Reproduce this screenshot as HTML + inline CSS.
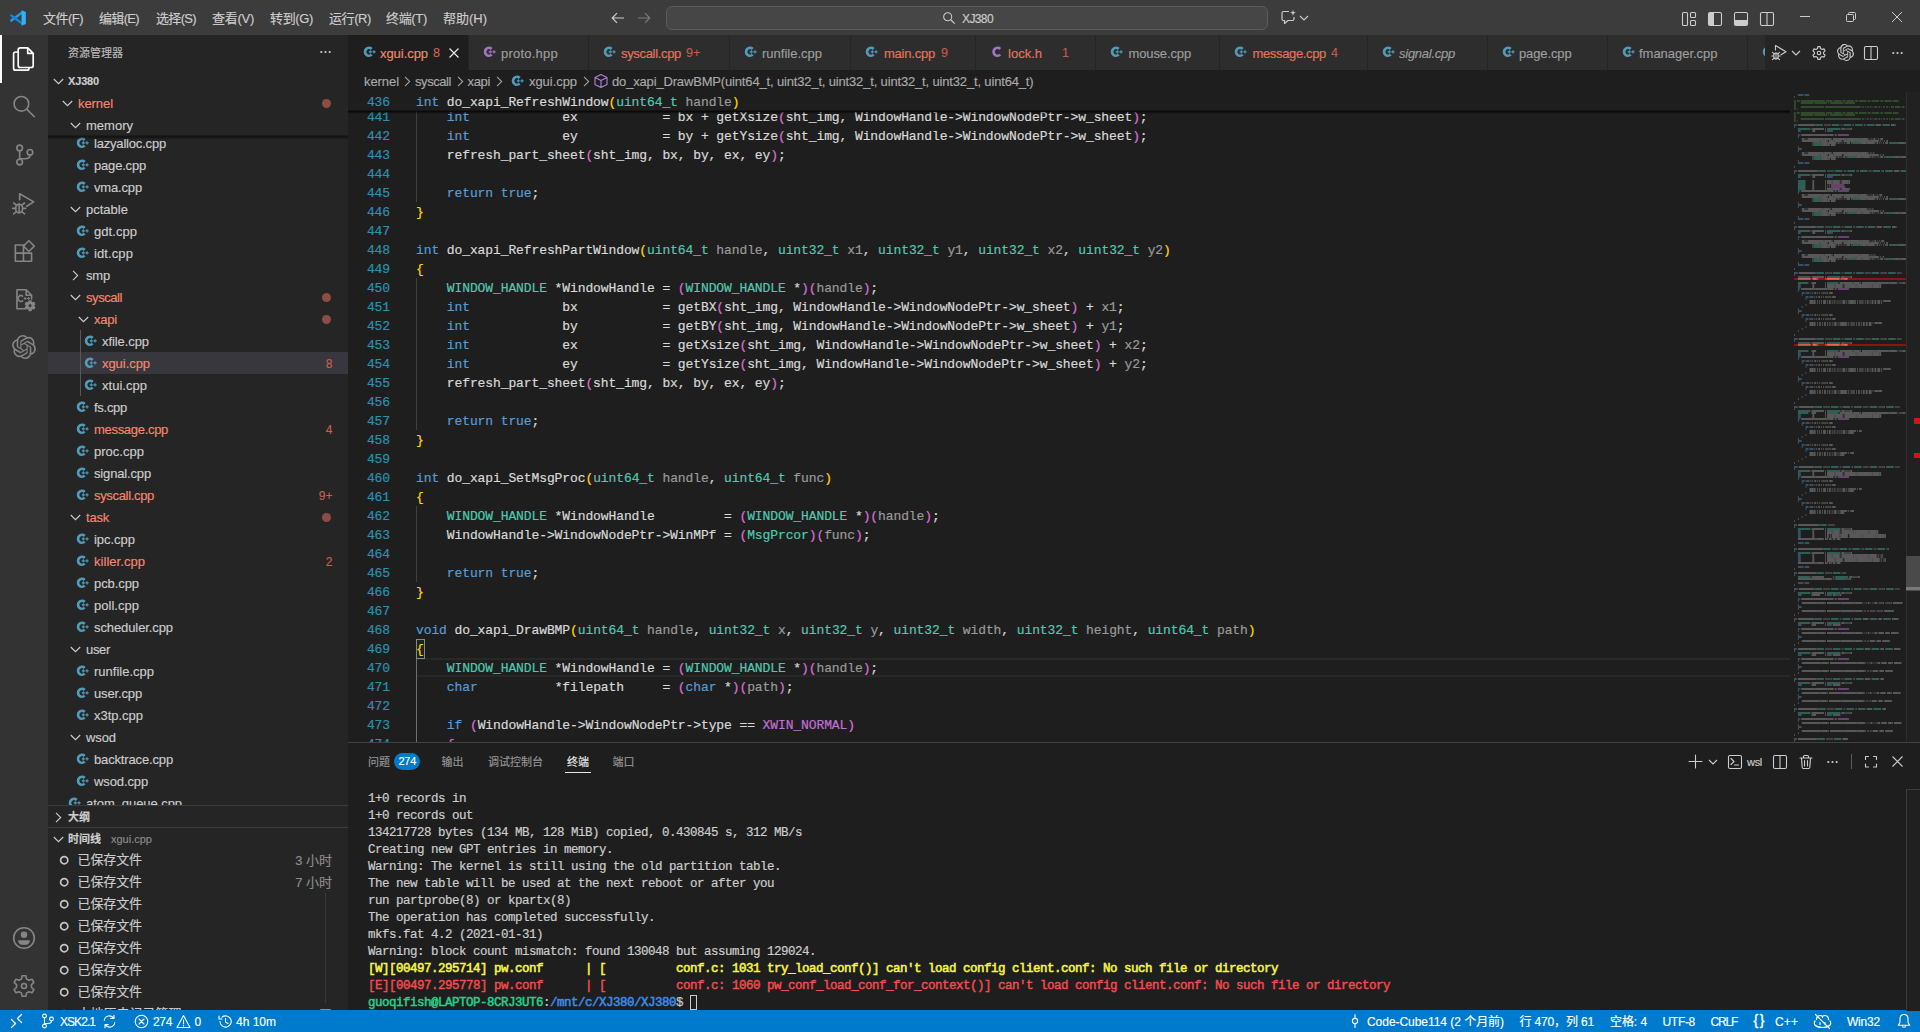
<!DOCTYPE html>
<html lang="zh-CN"><head><meta charset="utf-8"><title>xgui.cpp - XJ380 - Visual Studio Code</title>
<style>
html,body{margin:0;padding:0;}
body{width:1920px;height:1032px;overflow:hidden;position:relative;background:#1e1e1e;font-family:"Liberation Sans","Noto Sans CJK SC",sans-serif;font-size:13px;color:#cccccc;}
.t{position:absolute;white-space:pre;-webkit-text-stroke:0.15px;}
.a{position:absolute;}
svg{position:absolute;overflow:visible;}
.cl{position:absolute;left:416px;height:19px;line-height:19px;white-space:pre;font-family:"Liberation Mono","Noto Sans CJK SC",monospace;font-size:13px;letter-spacing:-0.101px;color:#d8d8d8;-webkit-text-stroke:0.2px;}
.ln{position:absolute;left:348px;width:42px;text-align:right;height:19px;line-height:19px;font-family:"Liberation Mono",monospace;font-size:13px;letter-spacing:-0.101px;color:#2b91af;-webkit-text-stroke:0.2px;}
.k{color:#569cd6}.ty{color:#4ec9b0}.m{color:#c26fd6}.p{color:#9a9a9a}.b1{color:#ffd700}.b2{color:#da70d6}.b3{color:#179fff}
.tl{position:absolute;left:368px;height:17px;line-height:17px;white-space:pre;font-family:"Liberation Mono","Noto Sans CJK SC",monospace;font-size:12.5px;letter-spacing:-0.501px;color:#cccccc;-webkit-text-stroke:0.2px;}

</style></head>
<body>
<div style="position:absolute;left:0px;top:0px;width:1920px;height:35px;background:#3c3c3c;"></div>
<div style="position:absolute;left:0px;top:35px;width:48px;height:975px;background:#333333;"></div>
<div style="position:absolute;left:48px;top:35px;width:300px;height:975px;background:#252526;"></div>
<div style="position:absolute;left:348px;top:35px;width:1572px;height:35px;background:#252526;"></div>
<div style="position:absolute;left:348px;top:70px;width:1572px;height:673px;background:#1e1e1e;"></div>
<div style="position:absolute;left:348px;top:743px;width:1572px;height:267px;background:#1e1e1e;"></div>
<div style="position:absolute;left:348px;top:742px;width:1572px;height:1px;background:#414141;"></div>
<div style="position:absolute;left:0px;top:1010px;width:1920px;height:22px;background:#007acc;"></div>
<svg style="left:10px;top:10px" width="16" height="16" viewBox="0 0 100 100"><path d="M73 18 L8 66" stroke="#1f9cf0" stroke-width="15" stroke-linecap="round"/><path d="M73 82 L8 34" stroke="#0f86d8" stroke-width="15" stroke-linecap="round"/><path d="M72 1 L99 13 V87 L72 99 Z" fill="#2fb1f5"/></svg>
<span class="t" style="left:43px;top:9px;line-height:19px;font-size:13px;color:#cccccc;letter-spacing:-0.522px;">文件(F)</span>
<span class="t" style="left:99px;top:9px;line-height:19px;font-size:13px;color:#cccccc;letter-spacing:-0.669px;">编辑(E)</span>
<span class="t" style="left:156px;top:9px;line-height:19px;font-size:13px;color:#cccccc;letter-spacing:-0.669px;">选择(S)</span>
<span class="t" style="left:212px;top:9px;line-height:19px;font-size:13px;color:#cccccc;letter-spacing:-0.269px;">查看(V)</span>
<span class="t" style="left:270px;top:9px;line-height:19px;font-size:13px;color:#cccccc;letter-spacing:-0.356px;">转到(G)</span>
<span class="t" style="left:329px;top:9px;line-height:19px;font-size:13px;color:#cccccc;letter-spacing:-0.409px;">运行(R)</span>
<span class="t" style="left:386px;top:9px;line-height:19px;font-size:13px;color:#cccccc;letter-spacing:-0.322px;">终端(T)</span>
<span class="t" style="left:443px;top:9px;line-height:19px;font-size:13px;color:#cccccc;letter-spacing:-0.009px;">帮助(H)</span>
<svg style="left:610px;top:10px" width="16" height="16" viewBox="0 0 16 16"><path d="M14 8 H2.5 M7 3.2 L2.2 8 L7 12.8" fill="none" stroke="#cccccc" stroke-width="1.2"/></svg>
<svg style="left:636px;top:10px" width="16" height="16" viewBox="0 0 16 16"><path d="M2 8 H13.5 M9 3.2 L13.8 8 L9 12.8" fill="none" stroke="#7a7a7a" stroke-width="1.2"/></svg>
<div class="a" style="left:666px;top:6px;width:600px;height:22px;background:#464646;border:1px solid #5c5c5c;border-radius:6px;"></div>
<svg style="left:942px;top:11px" width="14" height="14" viewBox="0 0 16 16"><circle cx="6.5" cy="6.5" r="4.6" fill="none" stroke="#cccccc" stroke-width="1.2"/><path d="M10 10 L14.5 14.5" stroke="#cccccc" stroke-width="1.3"/></svg>
<span class="t" style="left:962px;top:10px;line-height:18px;font-size:12px;color:#cccccc;letter-spacing:-0.606px;">XJ380</span>
<svg style="left:1280px;top:9px" width="17" height="17" viewBox="0 0 17 17"><path d="M9 2.5 H3.5 Q2 2.5 2 4 V10 Q2 11.5 3.5 11.5 H4.5 V14.5 L8 11.5 H12.5 Q14 11.5 14 10 V8" fill="none" stroke="#cccccc" stroke-width="1.2" stroke-linejoin="round"/><path d="M13 0.8 L13.7 3 L16 3.8 L13.7 4.6 L13 6.8 L12.3 4.6 L10 3.8 L12.3 3 Z" fill="#cccccc"/></svg>
<svg style="left:1299px;top:13px" width="10" height="10" viewBox="0 0 10 10"><path d="M1 3 L5 7 L9 3" fill="none" stroke="#cccccc" stroke-width="1.1"/></svg>
<svg style="left:1681px;top:11px" width="16" height="16" viewBox="0 0 16 16"><rect x="1.5" y="1.5" width="5" height="13" rx="1" stroke="#cccccc" stroke-width="1.1" fill="none"/><rect x="9.5" y="1.5" width="5" height="5" rx="1" stroke="#cccccc" stroke-width="1.1" fill="none"/><rect x="9.5" y="9.5" width="5" height="5" rx="1" stroke="#cccccc" stroke-width="1.1" fill="none"/></svg>
<svg style="left:1707px;top:11px" width="16" height="16" viewBox="0 0 16 16"><rect x="1.5" y="1.5" width="13" height="13" rx="1.5" stroke="#cccccc" stroke-width="1.1" fill="none"/><path d="M2 2 H7 V14 H2 Z" fill="#cccccc"/></svg>
<svg style="left:1733px;top:11px" width="16" height="16" viewBox="0 0 16 16"><rect x="1.5" y="1.5" width="13" height="13" rx="1.5" stroke="#cccccc" stroke-width="1.1" fill="none"/><path d="M2 9 H14 V14 H2 Z" fill="#cccccc"/></svg>
<svg style="left:1759px;top:11px" width="16" height="16" viewBox="0 0 16 16"><rect x="1.5" y="1.5" width="13" height="13" rx="1.5" stroke="#cccccc" stroke-width="1.1" fill="none"/><path d="M8 2 V14" stroke="#cccccc" stroke-width="1.1" fill="none"/></svg>
<svg style="left:1800px;top:12px" width="10" height="10" viewBox="0 0 10 10"><path d="M0 4.5 H10" stroke="#cccccc" stroke-width="1"/></svg>
<svg style="left:1846px;top:12px" width="10" height="10" viewBox="0 0 10 10"><rect x="0.5" y="2.5" width="7" height="7" rx="1" fill="none" stroke="#cccccc" stroke-width="1"/><path d="M2.5 2.5 V1.5 Q2.5 0.5 3.5 0.5 H8.5 Q9.5 0.5 9.5 1.5 V6.5 Q9.5 7.5 8.5 7.5 H7.5" fill="none" stroke="#cccccc" stroke-width="1"/></svg>
<svg style="left:1892px;top:12px" width="10" height="10" viewBox="0 0 10 10"><path d="M0 0 L10 10 M10 0 L0 10" stroke="#cccccc" stroke-width="1"/></svg>
<div style="position:absolute;left:0px;top:35px;width:2px;height:48px;background:#ffffff;"></div>
<svg style="left:12px;top:47px" width="24" height="24" viewBox="0 0 24 24" fill="none" stroke="#ffffff" stroke-width="1.7" stroke-linejoin="round"><path d="M9.2 0.9 H15.7 L21.2 6.4 V18.5 Q21.2 20.5 19.2 20.5 H8.2 Q6.2 20.5 6.2 18.5 V2.9 Q6.2 0.9 8.2 0.9 Z M15.7 0.9 V6.4 H21.2"/><path d="M6.2 5 H3.6 Q1.6 5 1.6 7 V21.2 Q1.6 23.2 3.6 23.2 H15 Q17 23.2 17 21.2 V20.5"/></svg>
<svg style="left:11px;top:94px" width="26" height="26" viewBox="0 0 24 24" fill="none" stroke="#858585" stroke-width="1.5" stroke-linejoin="round" stroke-linecap="round"><circle cx="9.6" cy="9.05" r="6.8"/><path d="M14.5 14 L21.5 21"/></svg>
<svg style="left:11px;top:142px" width="26" height="26" viewBox="0 0 24 24" fill="none" stroke="#858585" stroke-width="1.5" stroke-linejoin="round" stroke-linecap="round"><circle cx="8" cy="5.5" r="2.6"/><circle cx="8" cy="18.5" r="2.6"/><circle cx="17.5" cy="9.5" r="2.6"/><path d="M8 8.2 V15.8 M17.5 12.2 Q17.5 15.5 13 15.5 H8"/></svg>
<svg style="left:11px;top:190px" width="26" height="26" viewBox="0 0 24 24" fill="none" stroke="#858585" stroke-width="1.5" stroke-linejoin="round" stroke-linecap="round"><path d="M8 9 V3.5 L21 11 L14.5 15"/><ellipse cx="7.5" cy="17" rx="3.2" ry="4"/><path d="M7.5 13 V21 M4.3 17 H1.5 M10.7 17 H13.5 M5 14 L2.5 12 M10 14 L12.5 12 M5 20 L2.5 22 M10 20 L12.5 22"/></svg>
<svg style="left:11px;top:238px" width="26" height="26" viewBox="0 0 24 24" fill="none" stroke="#858585" stroke-width="1.5" stroke-linejoin="round" stroke-linecap="round"><path d="M4 6.5 H11.5 V14 H19 V21.5 H4 Z M11.5 14 V21.5 M4 14 H11.5"/><path d="M16.5 3 L21.5 8 L16.5 13 L11.5 8 Z" transform="translate(0,-0.5)"/></svg>
<svg style="left:11px;top:286px" width="26" height="26" viewBox="0 0 24 24" fill="none" stroke="#858585" stroke-width="1.5" stroke-linejoin="round" stroke-linecap="round"><path d="M13 21 H5.5 V3.5 H14 L19 8.5 V12 M14 3.5 V8.5 H19"/><path d="M10.8 9.3 A2.7 2.7 0 1 0 10.8 13.7" stroke-width="1.4"/><path d="M12 11.5 H14 M13 10.5 V12.5 M15.2 11.5 H17.2 M16.2 10.5 V12.5" stroke-width="0.9"/><g transform="translate(17.6 18.2) scale(0.46) translate(-12 -12)" stroke-width="3.2"><circle cx="12" cy="12" r="2.2"/><path d="M10.3 2.5 H13.7 L14.3 5.4 L16.6 6.7 L19.4 5.8 L21.1 8.7 L18.9 10.7 V13.3 L21.1 15.3 L19.4 18.2 L16.6 17.3 L14.3 18.6 L13.7 21.5 H10.3 L9.7 18.6 L7.4 17.3 L4.6 18.2 L2.9 15.3 L5.1 13.3 V10.7 L2.9 8.7 L4.6 5.8 L7.4 6.7 L9.7 5.4 Z" fill="#858585"/><circle cx="12" cy="12" r="3" fill="#333333" stroke="none"/></g></svg>
<svg style="left:12px;top:335px" width="24" height="24" viewBox="0 0 24 24"><path d="M22.2819 9.8211a5.9847 5.9847 0 0 0-.5157-4.9108 6.0462 6.0462 0 0 0-6.5098-2.9A6.0651 6.0651 0 0 0 4.9807 4.1818a5.9847 5.9847 0 0 0-3.9977 2.9 6.0462 6.0462 0 0 0 .7427 7.0966 5.98 5.98 0 0 0 .511 4.9107 6.051 6.051 0 0 0 6.5146 2.9001A5.9847 5.9847 0 0 0 13.2599 24a6.0557 6.0557 0 0 0 5.7718-4.2058 5.9894 5.9894 0 0 0 3.9977-2.9001 6.0557 6.0557 0 0 0-.7475-7.0729zm-9.022 12.6081a4.4755 4.4755 0 0 1-2.8764-1.0408l.1419-.0804 4.7783-2.7582a.7948.7948 0 0 0 .3927-.6813v-6.7369l2.02 1.1686a.071.071 0 0 1 .038.052v5.5826a4.504 4.504 0 0 1-4.4945 4.4944zm-9.6607-4.1254a4.4708 4.4708 0 0 1-.5346-3.0137l.142.0852 4.783 2.7582a.7712.7712 0 0 0 .7806 0l5.8428-3.3685v2.3324a.0804.0804 0 0 1-.0332.0615L9.74 19.9502a4.4992 4.4992 0 0 1-6.1408-1.6464zM2.3408 7.8956a4.485 4.485 0 0 1 2.3655-1.9728V11.6a.7664.7664 0 0 0 .3879.6765l5.8144 3.3543-2.0201 1.1685a.0757.0757 0 0 1-.071 0l-4.8303-2.7865A4.504 4.504 0 0 1 2.3408 7.872zm16.5963 3.8558L13.1038 8.364 15.1192 7.2a.0757.0757 0 0 1 .071 0l4.8303 2.7913a4.4944 4.4944 0 0 1-.6765 8.1042v-5.6772a.79.79 0 0 0-.407-.667zm2.0107-3.0231l-.142-.0852-4.7735-2.7818a.7759.7759 0 0 0-.7854 0L9.409 9.2297V6.8974a.0662.0662 0 0 1 .0284-.0615l4.8303-2.7866a4.4992 4.4992 0 0 1 6.6802 4.66zM8.3065 12.863l-2.02-1.1638a.0804.0804 0 0 1-.038-.0567V6.0742a4.4992 4.4992 0 0 1 7.3757-3.4537l-.142.0805L8.704 5.459a.7948.7948 0 0 0-.3927.6813zm1.0976-2.3654l2.602-1.4998 2.6069 1.4998v2.9994l-2.5974 1.4997-2.6067-1.4997Z" fill="#858585"/></svg>
<svg style="left:11px;top:925px" width="26" height="26" viewBox="0 0 24 24" fill="none" stroke="#858585" stroke-width="1.5" stroke-linejoin="round" stroke-linecap="round"><circle cx="12" cy="12" r="9.5"/><circle cx="12" cy="9" r="3" fill="#858585" stroke="none"/><path d="M6.5 14 H17.5 Q17.5 18.5 12 18.5 Q6.5 18.5 6.5 14 Z" fill="#858585" stroke="none"/></svg>
<svg style="left:11px;top:973px" width="26" height="26" viewBox="0 0 24 24" fill="none" stroke="#858585" stroke-width="1.5" stroke-linejoin="round" stroke-linecap="round"><circle cx="12" cy="12" r="2.3"/><path d="M10.3 2.5 H13.7 L14.3 5.4 L16.6 6.7 L19.4 5.8 L21.1 8.7 L18.9 10.7 V13.3 L21.1 15.3 L19.4 18.2 L16.6 17.3 L14.3 18.6 L13.7 21.5 H10.3 L9.7 18.6 L7.4 17.3 L4.6 18.2 L2.9 15.3 L5.1 13.3 V10.7 L2.9 8.7 L4.6 5.8 L7.4 6.7 L9.7 5.4 Z"/></svg>
<span class="t" style="left:68px;top:44.5px;line-height:17px;font-size:11px;color:#bbbbbb;">资源管理器</span>
<svg style="left:320px;top:50px" width="11" height="4" viewBox="0 0 11 4"><circle cx="1.3" cy="2" r="1.1" fill="#cccccc"/><circle cx="5.5" cy="2" r="1.1" fill="#cccccc"/><circle cx="9.7" cy="2" r="1.1" fill="#cccccc"/></svg>
<div style="position:absolute;left:48px;top:352px;width:300px;height:22px;background:#37373d;"></div>
<div style="position:absolute;left:80px;top:330px;width:1px;height:66px;background:#585858;"></div>
<div class="a" style="left:0;top:136px;width:348px;height:669px;overflow:hidden"><div class="a" style="left:0;top:-136px;width:348px;height:1032px"><svg style="left:77px;top:137px" width="13" height="12" viewBox="0 0 13 12"><path d="M7.75 2.95 A3.95 3.95 0 1 0 7.75 8.65" fill="none" stroke="#519aba" stroke-width="2.7"/><path d="M4.7 5.8 H7.9 M6.3 4.2 V7.4 M8.4 5.8 H11.6 M10 4.2 V7.4" fill="none" stroke="#519aba" stroke-width="1.15"/></svg><span class="t" style="left:94px;top:133.5px;line-height:19px;font-size:13px;color:#cccccc;letter-spacing:-0.188px;">lazyalloc.cpp</span><svg style="left:77px;top:159px" width="13" height="12" viewBox="0 0 13 12"><path d="M7.75 2.95 A3.95 3.95 0 1 0 7.75 8.65" fill="none" stroke="#519aba" stroke-width="2.7"/><path d="M4.7 5.8 H7.9 M6.3 4.2 V7.4 M8.4 5.8 H11.6 M10 4.2 V7.4" fill="none" stroke="#519aba" stroke-width="1.15"/></svg><span class="t" style="left:94px;top:155.5px;line-height:19px;font-size:13px;color:#cccccc;letter-spacing:-0.188px;">page.cpp</span><svg style="left:77px;top:181px" width="13" height="12" viewBox="0 0 13 12"><path d="M7.75 2.95 A3.95 3.95 0 1 0 7.75 8.65" fill="none" stroke="#519aba" stroke-width="2.7"/><path d="M4.7 5.8 H7.9 M6.3 4.2 V7.4 M8.4 5.8 H11.6 M10 4.2 V7.4" fill="none" stroke="#519aba" stroke-width="1.15"/></svg><span class="t" style="left:94px;top:177.5px;line-height:19px;font-size:13px;color:#cccccc;letter-spacing:-0.163px;">vma.cpp</span><svg style="left:69.5px;top:203.5px" width="11" height="11" viewBox="0 0 11 11"><path d="M0.8 3 L5.5 7.7 L10.2 3" fill="none" stroke="#cccccc" stroke-width="1.1"/></svg><span class="t" style="left:86px;top:199.5px;line-height:19px;font-size:13px;color:#cccccc;letter-spacing:0.011px;">pctable</span><svg style="left:77px;top:225px" width="13" height="12" viewBox="0 0 13 12"><path d="M7.75 2.95 A3.95 3.95 0 1 0 7.75 8.65" fill="none" stroke="#519aba" stroke-width="2.7"/><path d="M4.7 5.8 H7.9 M6.3 4.2 V7.4 M8.4 5.8 H11.6 M10 4.2 V7.4" fill="none" stroke="#519aba" stroke-width="1.15"/></svg><span class="t" style="left:94px;top:221.5px;line-height:19px;font-size:13px;color:#cccccc;letter-spacing:0.049px;">gdt.cpp</span><svg style="left:77px;top:247px" width="13" height="12" viewBox="0 0 13 12"><path d="M7.75 2.95 A3.95 3.95 0 1 0 7.75 8.65" fill="none" stroke="#519aba" stroke-width="2.7"/><path d="M4.7 5.8 H7.9 M6.3 4.2 V7.4 M8.4 5.8 H11.6 M10 4.2 V7.4" fill="none" stroke="#519aba" stroke-width="1.15"/></svg><span class="t" style="left:94px;top:243.5px;line-height:19px;font-size:13px;color:#cccccc;letter-spacing:0.098px;">idt.cpp</span><svg style="left:70px;top:269.5px" width="11" height="11" viewBox="0 0 11 11"><path d="M3 0.8 L7.7 5.5 L3 10.2" fill="none" stroke="#cccccc" stroke-width="1.1"/></svg><span class="t" style="left:86px;top:265.5px;line-height:19px;font-size:13px;color:#cccccc;letter-spacing:-0.188px;">smp</span><svg style="left:69.5px;top:291.5px" width="11" height="11" viewBox="0 0 11 11"><path d="M0.8 3 L5.5 7.7 L10.2 3" fill="none" stroke="#cccccc" stroke-width="1.1"/></svg><span class="t" style="left:86px;top:287.5px;line-height:19px;font-size:13px;color:#f48771;letter-spacing:-0.431px;">syscall</span><div class="a" style="left:322px;top:292.5px;width:9px;height:9px;border-radius:5px;background:#8c4d43"></div><svg style="left:77.5px;top:313.5px" width="11" height="11" viewBox="0 0 11 11"><path d="M0.8 3 L5.5 7.7 L10.2 3" fill="none" stroke="#cccccc" stroke-width="1.1"/></svg><span class="t" style="left:94px;top:309.5px;line-height:19px;font-size:13px;color:#f48771;letter-spacing:-0.215px;">xapi</span><div class="a" style="left:322px;top:314.5px;width:9px;height:9px;border-radius:5px;background:#8c4d43"></div><svg style="left:85px;top:335px" width="13" height="12" viewBox="0 0 13 12"><path d="M7.75 2.95 A3.95 3.95 0 1 0 7.75 8.65" fill="none" stroke="#519aba" stroke-width="2.7"/><path d="M4.7 5.8 H7.9 M6.3 4.2 V7.4 M8.4 5.8 H11.6 M10 4.2 V7.4" fill="none" stroke="#519aba" stroke-width="1.15"/></svg><span class="t" style="left:102px;top:331.5px;line-height:19px;font-size:13px;color:#cccccc;letter-spacing:-0.078px;">xfile.cpp</span><svg style="left:85px;top:357px" width="13" height="12" viewBox="0 0 13 12"><path d="M7.75 2.95 A3.95 3.95 0 1 0 7.75 8.65" fill="none" stroke="#519aba" stroke-width="2.7"/><path d="M4.7 5.8 H7.9 M6.3 4.2 V7.4 M8.4 5.8 H11.6 M10 4.2 V7.4" fill="none" stroke="#519aba" stroke-width="1.15"/></svg><span class="t" style="left:102px;top:353.5px;line-height:19px;font-size:13px;color:#f48771;letter-spacing:-0.053px;">xgui.cpp</span><span class="t" style="left:32.5px;width:300px;text-align:right;top:355px;line-height:18px;font-size:12px;color:#c5604f;">8</span><svg style="left:85px;top:379px" width="13" height="12" viewBox="0 0 13 12"><path d="M7.75 2.95 A3.95 3.95 0 1 0 7.75 8.65" fill="none" stroke="#519aba" stroke-width="2.7"/><path d="M4.7 5.8 H7.9 M6.3 4.2 V7.4 M8.4 5.8 H11.6 M10 4.2 V7.4" fill="none" stroke="#519aba" stroke-width="1.15"/></svg><span class="t" style="left:102px;top:375.5px;line-height:19px;font-size:13px;color:#cccccc;letter-spacing:0.023px;">xtui.cpp</span><svg style="left:77px;top:401px" width="13" height="12" viewBox="0 0 13 12"><path d="M7.75 2.95 A3.95 3.95 0 1 0 7.75 8.65" fill="none" stroke="#519aba" stroke-width="2.7"/><path d="M4.7 5.8 H7.9 M6.3 4.2 V7.4 M8.4 5.8 H11.6 M10 4.2 V7.4" fill="none" stroke="#519aba" stroke-width="1.15"/></svg><span class="t" style="left:94px;top:397.5px;line-height:19px;font-size:13px;color:#cccccc;letter-spacing:-0.281px;">fs.cpp</span><svg style="left:77px;top:423px" width="13" height="12" viewBox="0 0 13 12"><path d="M7.75 2.95 A3.95 3.95 0 1 0 7.75 8.65" fill="none" stroke="#519aba" stroke-width="2.7"/><path d="M4.7 5.8 H7.9 M6.3 4.2 V7.4 M8.4 5.8 H11.6 M10 4.2 V7.4" fill="none" stroke="#519aba" stroke-width="1.15"/></svg><span class="t" style="left:94px;top:419.5px;line-height:19px;font-size:13px;color:#f48771;letter-spacing:-0.303px;">message.cpp</span><span class="t" style="left:32.5px;width:300px;text-align:right;top:421px;line-height:18px;font-size:12px;color:#c5604f;">4</span><svg style="left:77px;top:445px" width="13" height="12" viewBox="0 0 13 12"><path d="M7.75 2.95 A3.95 3.95 0 1 0 7.75 8.65" fill="none" stroke="#519aba" stroke-width="2.7"/><path d="M4.7 5.8 H7.9 M6.3 4.2 V7.4 M8.4 5.8 H11.6 M10 4.2 V7.4" fill="none" stroke="#519aba" stroke-width="1.15"/></svg><span class="t" style="left:94px;top:441.5px;line-height:19px;font-size:13px;color:#cccccc;letter-spacing:0.016px;">proc.cpp</span><svg style="left:77px;top:467px" width="13" height="12" viewBox="0 0 13 12"><path d="M7.75 2.95 A3.95 3.95 0 1 0 7.75 8.65" fill="none" stroke="#519aba" stroke-width="2.7"/><path d="M4.7 5.8 H7.9 M6.3 4.2 V7.4 M8.4 5.8 H11.6 M10 4.2 V7.4" fill="none" stroke="#519aba" stroke-width="1.15"/></svg><span class="t" style="left:94px;top:463.5px;line-height:19px;font-size:13px;color:#cccccc;letter-spacing:-0.155px;">signal.cpp</span><svg style="left:77px;top:489px" width="13" height="12" viewBox="0 0 13 12"><path d="M7.75 2.95 A3.95 3.95 0 1 0 7.75 8.65" fill="none" stroke="#519aba" stroke-width="2.7"/><path d="M4.7 5.8 H7.9 M6.3 4.2 V7.4 M8.4 5.8 H11.6 M10 4.2 V7.4" fill="none" stroke="#519aba" stroke-width="1.15"/></svg><span class="t" style="left:94px;top:485.5px;line-height:19px;font-size:13px;color:#f48771;letter-spacing:-0.325px;">syscall.cpp</span><span class="t" style="left:32.5px;width:300px;text-align:right;top:487px;line-height:18px;font-size:12px;color:#c5604f;">9+</span><svg style="left:69.5px;top:511.5px" width="11" height="11" viewBox="0 0 11 11"><path d="M0.8 3 L5.5 7.7 L10.2 3" fill="none" stroke="#cccccc" stroke-width="1.1"/></svg><span class="t" style="left:86px;top:507.5px;line-height:19px;font-size:13px;color:#f48771;letter-spacing:-0.211px;">task</span><div class="a" style="left:322px;top:512.5px;width:9px;height:9px;border-radius:5px;background:#8c4d43"></div><svg style="left:77px;top:533px" width="13" height="12" viewBox="0 0 13 12"><path d="M7.75 2.95 A3.95 3.95 0 1 0 7.75 8.65" fill="none" stroke="#519aba" stroke-width="2.7"/><path d="M4.7 5.8 H7.9 M6.3 4.2 V7.4 M8.4 5.8 H11.6 M10 4.2 V7.4" fill="none" stroke="#519aba" stroke-width="1.15"/></svg><span class="t" style="left:94px;top:529.5px;line-height:19px;font-size:13px;color:#cccccc;letter-spacing:-0.029px;">ipc.cpp</span><svg style="left:77px;top:555px" width="13" height="12" viewBox="0 0 13 12"><path d="M7.75 2.95 A3.95 3.95 0 1 0 7.75 8.65" fill="none" stroke="#519aba" stroke-width="2.7"/><path d="M4.7 5.8 H7.9 M6.3 4.2 V7.4 M8.4 5.8 H11.6 M10 4.2 V7.4" fill="none" stroke="#519aba" stroke-width="1.15"/></svg><span class="t" style="left:94px;top:551.5px;line-height:19px;font-size:13px;color:#f48771;letter-spacing:0.042px;">killer.cpp</span><span class="t" style="left:32.5px;width:300px;text-align:right;top:553px;line-height:18px;font-size:12px;color:#c5604f;">2</span><svg style="left:77px;top:577px" width="13" height="12" viewBox="0 0 13 12"><path d="M7.75 2.95 A3.95 3.95 0 1 0 7.75 8.65" fill="none" stroke="#519aba" stroke-width="2.7"/><path d="M4.7 5.8 H7.9 M6.3 4.2 V7.4 M8.4 5.8 H11.6 M10 4.2 V7.4" fill="none" stroke="#519aba" stroke-width="1.15"/></svg><span class="t" style="left:94px;top:573.5px;line-height:19px;font-size:13px;color:#cccccc;letter-spacing:-0.078px;">pcb.cpp</span><svg style="left:77px;top:599px" width="13" height="12" viewBox="0 0 13 12"><path d="M7.75 2.95 A3.95 3.95 0 1 0 7.75 8.65" fill="none" stroke="#519aba" stroke-width="2.7"/><path d="M4.7 5.8 H7.9 M6.3 4.2 V7.4 M8.4 5.8 H11.6 M10 4.2 V7.4" fill="none" stroke="#519aba" stroke-width="1.15"/></svg><span class="t" style="left:94px;top:595.5px;line-height:19px;font-size:13px;color:#cccccc;letter-spacing:0.023px;">poll.cpp</span><svg style="left:77px;top:621px" width="13" height="12" viewBox="0 0 13 12"><path d="M7.75 2.95 A3.95 3.95 0 1 0 7.75 8.65" fill="none" stroke="#519aba" stroke-width="2.7"/><path d="M4.7 5.8 H7.9 M6.3 4.2 V7.4 M8.4 5.8 H11.6 M10 4.2 V7.4" fill="none" stroke="#519aba" stroke-width="1.15"/></svg><span class="t" style="left:94px;top:617.5px;line-height:19px;font-size:13px;color:#cccccc;letter-spacing:-0.095px;">scheduler.cpp</span><svg style="left:69.5px;top:643.5px" width="11" height="11" viewBox="0 0 11 11"><path d="M0.8 3 L5.5 7.7 L10.2 3" fill="none" stroke="#cccccc" stroke-width="1.1"/></svg><span class="t" style="left:86px;top:639.5px;line-height:19px;font-size:13px;color:#cccccc;letter-spacing:-0.324px;">user</span><svg style="left:77px;top:665px" width="13" height="12" viewBox="0 0 13 12"><path d="M7.75 2.95 A3.95 3.95 0 1 0 7.75 8.65" fill="none" stroke="#519aba" stroke-width="2.7"/><path d="M4.7 5.8 H7.9 M6.3 4.2 V7.4 M8.4 5.8 H11.6 M10 4.2 V7.4" fill="none" stroke="#519aba" stroke-width="1.15"/></svg><span class="t" style="left:94px;top:661.5px;line-height:19px;font-size:13px;color:#cccccc;letter-spacing:0.001px;">runfile.cpp</span><svg style="left:77px;top:687px" width="13" height="12" viewBox="0 0 13 12"><path d="M7.75 2.95 A3.95 3.95 0 1 0 7.75 8.65" fill="none" stroke="#519aba" stroke-width="2.7"/><path d="M4.7 5.8 H7.9 M6.3 4.2 V7.4 M8.4 5.8 H11.6 M10 4.2 V7.4" fill="none" stroke="#519aba" stroke-width="1.15"/></svg><span class="t" style="left:94px;top:683.5px;line-height:19px;font-size:13px;color:#cccccc;letter-spacing:-0.145px;">user.cpp</span><svg style="left:77px;top:709px" width="13" height="12" viewBox="0 0 13 12"><path d="M7.75 2.95 A3.95 3.95 0 1 0 7.75 8.65" fill="none" stroke="#519aba" stroke-width="2.7"/><path d="M4.7 5.8 H7.9 M6.3 4.2 V7.4 M8.4 5.8 H11.6 M10 4.2 V7.4" fill="none" stroke="#519aba" stroke-width="1.15"/></svg><span class="t" style="left:94px;top:705.5px;line-height:19px;font-size:13px;color:#cccccc;letter-spacing:-0.020px;">x3tp.cpp</span><svg style="left:69.5px;top:731.5px" width="11" height="11" viewBox="0 0 11 11"><path d="M0.8 3 L5.5 7.7 L10.2 3" fill="none" stroke="#cccccc" stroke-width="1.1"/></svg><span class="t" style="left:86px;top:727.5px;line-height:19px;font-size:13px;color:#cccccc;letter-spacing:-0.090px;">wsod</span><svg style="left:77px;top:753px" width="13" height="12" viewBox="0 0 13 12"><path d="M7.75 2.95 A3.95 3.95 0 1 0 7.75 8.65" fill="none" stroke="#519aba" stroke-width="2.7"/><path d="M4.7 5.8 H7.9 M6.3 4.2 V7.4 M8.4 5.8 H11.6 M10 4.2 V7.4" fill="none" stroke="#519aba" stroke-width="1.15"/></svg><span class="t" style="left:94px;top:749.5px;line-height:19px;font-size:13px;color:#cccccc;letter-spacing:-0.149px;">backtrace.cpp</span><svg style="left:77px;top:775px" width="13" height="12" viewBox="0 0 13 12"><path d="M7.75 2.95 A3.95 3.95 0 1 0 7.75 8.65" fill="none" stroke="#519aba" stroke-width="2.7"/><path d="M4.7 5.8 H7.9 M6.3 4.2 V7.4 M8.4 5.8 H11.6 M10 4.2 V7.4" fill="none" stroke="#519aba" stroke-width="1.15"/></svg><span class="t" style="left:94px;top:771.5px;line-height:19px;font-size:13px;color:#cccccc;letter-spacing:-0.115px;">wsod.cpp</span><svg style="left:69px;top:797px" width="13" height="12" viewBox="0 0 13 12"><path d="M7.75 2.95 A3.95 3.95 0 1 0 7.75 8.65" fill="none" stroke="#519aba" stroke-width="2.7"/><path d="M4.7 5.8 H7.9 M6.3 4.2 V7.4 M8.4 5.8 H11.6 M10 4.2 V7.4" fill="none" stroke="#519aba" stroke-width="1.15"/></svg><span class="t" style="left:86px;top:793.5px;line-height:19px;font-size:13px;color:#cccccc;letter-spacing:-0.061px;">atom_queue.cpp</span></div></div>
<svg style="left:53px;top:75.5px" width="11" height="11" viewBox="0 0 11 11"><path d="M0.8 3 L5.5 7.7 L10.2 3" fill="none" stroke="#cccccc" stroke-width="1.1"/></svg>
<span class="t" style="left:68px;top:72.5px;line-height:17px;font-size:11px;color:#cccccc;font-weight:bold;letter-spacing:-0.163px;">XJ380</span>
<svg style="left:61.5px;top:97.5px" width="11" height="11" viewBox="0 0 11 11"><path d="M0.8 3 L5.5 7.7 L10.2 3" fill="none" stroke="#cccccc" stroke-width="1.1"/></svg>
<span class="t" style="left:78px;top:93.5px;line-height:19px;font-size:13px;color:#f48771;letter-spacing:-0.070px;">kernel</span>
<div class="a" style="left:322px;top:98.5px;width:9px;height:9px;border-radius:5px;background:#8c4d43"></div>
<svg style="left:69.5px;top:119.5px" width="11" height="11" viewBox="0 0 11 11"><path d="M0.8 3 L5.5 7.7 L10.2 3" fill="none" stroke="#cccccc" stroke-width="1.1"/></svg>
<span class="t" style="left:86px;top:115.5px;line-height:19px;font-size:13px;color:#cccccc;letter-spacing:0.008px;">memory</span>
<div class="a" style="left:48px;top:136px;width:300px;height:4px;background:linear-gradient(#0000008c,#00000000)"></div>
<div style="position:absolute;left:48px;top:135px;width:300px;height:1px;background:#1c1c1c;"></div>
<div style="position:absolute;left:48px;top:805px;width:300px;height:1px;background:#3c3c3c;"></div>
<svg style="left:52.5px;top:811.5px" width="11" height="11" viewBox="0 0 11 11"><path d="M3 0.8 L7.7 5.5 L3 10.2" fill="none" stroke="#cccccc" stroke-width="1.1"/></svg>
<span class="t" style="left:68px;top:808.5px;line-height:17px;font-size:11px;color:#cccccc;font-weight:bold;">大纲</span>
<div style="position:absolute;left:48px;top:827px;width:300px;height:1px;background:#3c3c3c;"></div>
<svg style="left:53px;top:833.5px" width="11" height="11" viewBox="0 0 11 11"><path d="M0.8 3 L5.5 7.7 L10.2 3" fill="none" stroke="#cccccc" stroke-width="1.1"/></svg>
<span class="t" style="left:68px;top:830.5px;line-height:17px;font-size:11px;color:#cccccc;font-weight:bold;">时间线</span>
<span class="t" style="left:111px;top:831px;line-height:17px;font-size:11px;color:#8c8c8c;letter-spacing:0.002px;">xgui.cpp</span>
<div class="a" style="left:0;top:849px;width:348px;height:161px;overflow:hidden"><div class="a" style="left:0;top:-849px;width:348px;height:1032px"><svg style="left:59px;top:855px" width="10" height="10" viewBox="0 0 10 10"><circle cx="5.2" cy="5.2" r="3.6" fill="none" stroke="#c5c5c5" stroke-width="1.7"/></svg><span class="t" style="left:77.5px;top:849.5px;line-height:19px;font-size:13px;color:#cccccc;letter-spacing:-0.103px;">已保存文件</span><span class="t" style="left:32px;width:300px;text-align:right;top:851px;line-height:19px;font-size:13px;color:#8c8c8c;">3 小时</span><svg style="left:59px;top:877px" width="10" height="10" viewBox="0 0 10 10"><circle cx="5.2" cy="5.2" r="3.6" fill="none" stroke="#c5c5c5" stroke-width="1.7"/></svg><span class="t" style="left:77.5px;top:871.5px;line-height:19px;font-size:13px;color:#cccccc;letter-spacing:-0.103px;">已保存文件</span><span class="t" style="left:32px;width:300px;text-align:right;top:873px;line-height:19px;font-size:13px;color:#8c8c8c;">7 小时</span><svg style="left:59px;top:899px" width="10" height="10" viewBox="0 0 10 10"><circle cx="5.2" cy="5.2" r="3.6" fill="none" stroke="#c5c5c5" stroke-width="1.7"/></svg><span class="t" style="left:77.5px;top:893.5px;line-height:19px;font-size:13px;color:#cccccc;letter-spacing:-0.103px;">已保存文件</span><svg style="left:59px;top:921px" width="10" height="10" viewBox="0 0 10 10"><circle cx="5.2" cy="5.2" r="3.6" fill="none" stroke="#c5c5c5" stroke-width="1.7"/></svg><span class="t" style="left:77.5px;top:915.5px;line-height:19px;font-size:13px;color:#cccccc;letter-spacing:-0.103px;">已保存文件</span><svg style="left:59px;top:943px" width="10" height="10" viewBox="0 0 10 10"><circle cx="5.2" cy="5.2" r="3.6" fill="none" stroke="#c5c5c5" stroke-width="1.7"/></svg><span class="t" style="left:77.5px;top:937.5px;line-height:19px;font-size:13px;color:#cccccc;letter-spacing:-0.103px;">已保存文件</span><svg style="left:59px;top:965px" width="10" height="10" viewBox="0 0 10 10"><circle cx="5.2" cy="5.2" r="3.6" fill="none" stroke="#c5c5c5" stroke-width="1.7"/></svg><span class="t" style="left:77.5px;top:959.5px;line-height:19px;font-size:13px;color:#cccccc;letter-spacing:-0.103px;">已保存文件</span><svg style="left:59px;top:987px" width="10" height="10" viewBox="0 0 10 10"><circle cx="5.2" cy="5.2" r="3.6" fill="none" stroke="#c5c5c5" stroke-width="1.7"/></svg><span class="t" style="left:77.5px;top:981.5px;line-height:19px;font-size:13px;color:#cccccc;letter-spacing:-0.103px;">已保存文件</span><svg style="left:59px;top:1009px" width="10" height="10" viewBox="0 0 10 10"><circle cx="5.2" cy="5.2" r="3.6" fill="none" stroke="#c5c5c5" stroke-width="1.7"/></svg><span class="t" style="left:77.5px;top:1003.5px;line-height:19px;font-size:13px;color:#cccccc;">本地历史记录管理</span><span class="t" style="left:32px;width:300px;text-align:right;top:1005px;line-height:19px;font-size:13px;color:#8c8c8c;">7 天</span></div></div>
<div style="position:absolute;left:325px;top:893px;width:1px;height:110px;background:#3a3a3a;"></div>
<div class="a" style="left:0;top:35px;width:1765px;height:35px;overflow:hidden"><div class="a" style="left:0;top:-35px;width:1920px;height:70px"><div style="position:absolute;left:348px;top:35px;width:120px;height:35px;background:#1e1e1e;"></div><div style="position:absolute;left:468px;top:35px;width:1px;height:35px;background:#252526;"></div><svg style="left:363.5px;top:45.5px" width="13" height="12" viewBox="0 0 13 12"><path d="M7.75 2.95 A3.95 3.95 0 1 0 7.75 8.65" fill="none" stroke="#519aba" stroke-width="2.7"/><path d="M4.7 5.8 H7.9 M6.3 4.2 V7.4 M8.4 5.8 H11.6 M10 4.2 V7.4" fill="none" stroke="#519aba" stroke-width="1.15"/></svg><span class="t" style="left:380px;top:44px;line-height:19px;font-size:13px;color:#f48771;letter-spacing:-0.053px;">xgui.cpp</span><span class="t" style="left:433px;top:44.25px;line-height:18.5px;font-size:12.5px;color:#d0624f;">8</span><div style="position:absolute;left:469px;top:35px;width:119px;height:35px;background:#2d2d2d;"></div><div style="position:absolute;left:588px;top:35px;width:1px;height:35px;background:#252526;"></div><svg style="left:483.5px;top:45.5px" width="13" height="12" viewBox="0 0 13 12"><path d="M7.75 2.95 A3.95 3.95 0 1 0 7.75 8.65" fill="none" stroke="#a074c4" stroke-width="2.7"/><path d="M4.7 5.8 H7.9 M6.3 4.2 V7.4 M8.4 5.8 H11.6 M10 4.2 V7.4" fill="none" stroke="#a074c4" stroke-width="1.15"/></svg><span class="t" style="left:501px;top:44px;line-height:19px;font-size:13px;color:#9d9d9d;letter-spacing:0.229px;">proto.hpp</span><div style="position:absolute;left:589px;top:35px;width:140px;height:35px;background:#2d2d2d;"></div><div style="position:absolute;left:729px;top:35px;width:1px;height:35px;background:#252526;"></div><svg style="left:603.5px;top:45.5px" width="13" height="12" viewBox="0 0 13 12"><path d="M7.75 2.95 A3.95 3.95 0 1 0 7.75 8.65" fill="none" stroke="#519aba" stroke-width="2.7"/><path d="M4.7 5.8 H7.9 M6.3 4.2 V7.4 M8.4 5.8 H11.6 M10 4.2 V7.4" fill="none" stroke="#519aba" stroke-width="1.15"/></svg><span class="t" style="left:621px;top:44px;line-height:19px;font-size:13px;color:#e6735f;letter-spacing:-0.325px;">syscall.cpp</span><span class="t" style="left:686px;top:44.25px;line-height:18.5px;font-size:12.5px;color:#c25b4a;">9+</span><div style="position:absolute;left:730px;top:35px;width:120px;height:35px;background:#2d2d2d;"></div><div style="position:absolute;left:850px;top:35px;width:1px;height:35px;background:#252526;"></div><svg style="left:744.5px;top:45.5px" width="13" height="12" viewBox="0 0 13 12"><path d="M7.75 2.95 A3.95 3.95 0 1 0 7.75 8.65" fill="none" stroke="#519aba" stroke-width="2.7"/><path d="M4.7 5.8 H7.9 M6.3 4.2 V7.4 M8.4 5.8 H11.6 M10 4.2 V7.4" fill="none" stroke="#519aba" stroke-width="1.15"/></svg><span class="t" style="left:762px;top:44px;line-height:19px;font-size:13px;color:#9d9d9d;letter-spacing:0.001px;">runfile.cpp</span><div style="position:absolute;left:851px;top:35px;width:124px;height:35px;background:#2d2d2d;"></div><div style="position:absolute;left:975px;top:35px;width:1px;height:35px;background:#252526;"></div><svg style="left:865.5px;top:45.5px" width="13" height="12" viewBox="0 0 13 12"><path d="M7.75 2.95 A3.95 3.95 0 1 0 7.75 8.65" fill="none" stroke="#519aba" stroke-width="2.7"/><path d="M4.7 5.8 H7.9 M6.3 4.2 V7.4 M8.4 5.8 H11.6 M10 4.2 V7.4" fill="none" stroke="#519aba" stroke-width="1.15"/></svg><span class="t" style="left:884px;top:44px;line-height:19px;font-size:13px;color:#e6735f;letter-spacing:-0.219px;">main.cpp</span><span class="t" style="left:941px;top:44.25px;line-height:18.5px;font-size:12.5px;color:#c25b4a;">9</span><div style="position:absolute;left:976px;top:35px;width:119px;height:35px;background:#2d2d2d;"></div><div style="position:absolute;left:1095px;top:35px;width:1px;height:35px;background:#252526;"></div><svg style="left:991.5px;top:45.5px" width="13" height="12" viewBox="0 0 13 12"><path d="M8.25 2.95 A3.95 3.95 0 1 0 8.25 8.65" fill="none" stroke="#a074c4" stroke-width="2.7"/></svg><span class="t" style="left:1008px;top:44px;line-height:19px;font-size:13px;color:#e6735f;letter-spacing:0.005px;">lock.h</span><span class="t" style="left:1062px;top:44.25px;line-height:18.5px;font-size:12.5px;color:#c25b4a;">1</span><div style="position:absolute;left:1096px;top:35px;width:123px;height:35px;background:#2d2d2d;"></div><div style="position:absolute;left:1219px;top:35px;width:1px;height:35px;background:#252526;"></div><svg style="left:1110.5px;top:45.5px" width="13" height="12" viewBox="0 0 13 12"><path d="M7.75 2.95 A3.95 3.95 0 1 0 7.75 8.65" fill="none" stroke="#519aba" stroke-width="2.7"/><path d="M4.7 5.8 H7.9 M6.3 4.2 V7.4 M8.4 5.8 H11.6 M10 4.2 V7.4" fill="none" stroke="#519aba" stroke-width="1.15"/></svg><span class="t" style="left:1128.5px;top:44px;line-height:19px;font-size:13px;color:#9d9d9d;letter-spacing:-0.122px;">mouse.cpp</span><div style="position:absolute;left:1220px;top:35px;width:147px;height:35px;background:#2d2d2d;"></div><div style="position:absolute;left:1367px;top:35px;width:1px;height:35px;background:#252526;"></div><svg style="left:1234.5px;top:45.5px" width="13" height="12" viewBox="0 0 13 12"><path d="M7.75 2.95 A3.95 3.95 0 1 0 7.75 8.65" fill="none" stroke="#519aba" stroke-width="2.7"/><path d="M4.7 5.8 H7.9 M6.3 4.2 V7.4 M8.4 5.8 H11.6 M10 4.2 V7.4" fill="none" stroke="#519aba" stroke-width="1.15"/></svg><span class="t" style="left:1252.5px;top:44px;line-height:19px;font-size:13px;color:#e6735f;letter-spacing:-0.348px;">message.cpp</span><span class="t" style="left:1331px;top:44.25px;line-height:18.5px;font-size:12.5px;color:#c25b4a;">4</span><div style="position:absolute;left:1368px;top:35px;width:119px;height:35px;background:#2d2d2d;"></div><div style="position:absolute;left:1487px;top:35px;width:1px;height:35px;background:#252526;"></div><svg style="left:1382.5px;top:45.5px" width="13" height="12" viewBox="0 0 13 12"><path d="M7.75 2.95 A3.95 3.95 0 1 0 7.75 8.65" fill="none" stroke="#519aba" stroke-width="2.7"/><path d="M4.7 5.8 H7.9 M6.3 4.2 V7.4 M8.4 5.8 H11.6 M10 4.2 V7.4" fill="none" stroke="#519aba" stroke-width="1.15"/></svg><span class="t" style="left:1399px;top:44px;line-height:19px;font-size:13px;color:#9d9d9d;font-style:italic;letter-spacing:-0.255px;">signal.cpp</span><div style="position:absolute;left:1488px;top:35px;width:119px;height:35px;background:#2d2d2d;"></div><div style="position:absolute;left:1607px;top:35px;width:1px;height:35px;background:#252526;"></div><svg style="left:1502.5px;top:45.5px" width="13" height="12" viewBox="0 0 13 12"><path d="M7.75 2.95 A3.95 3.95 0 1 0 7.75 8.65" fill="none" stroke="#519aba" stroke-width="2.7"/><path d="M4.7 5.8 H7.9 M6.3 4.2 V7.4 M8.4 5.8 H11.6 M10 4.2 V7.4" fill="none" stroke="#519aba" stroke-width="1.15"/></svg><span class="t" style="left:1519px;top:44px;line-height:19px;font-size:13px;color:#9d9d9d;letter-spacing:-0.125px;">page.cpp</span><div style="position:absolute;left:1608px;top:35px;width:139px;height:35px;background:#2d2d2d;"></div><div style="position:absolute;left:1747px;top:35px;width:1px;height:35px;background:#252526;"></div><svg style="left:1622.5px;top:45.5px" width="13" height="12" viewBox="0 0 13 12"><path d="M7.75 2.95 A3.95 3.95 0 1 0 7.75 8.65" fill="none" stroke="#519aba" stroke-width="2.7"/><path d="M4.7 5.8 H7.9 M6.3 4.2 V7.4 M8.4 5.8 H11.6 M10 4.2 V7.4" fill="none" stroke="#519aba" stroke-width="1.15"/></svg><span class="t" style="left:1639px;top:44px;line-height:19px;font-size:13px;color:#9d9d9d;letter-spacing:-0.023px;">fmanager.cpp</span><div style="position:absolute;left:1748px;top:35px;width:19px;height:35px;background:#2d2d2d;"></div><div style="position:absolute;left:1767px;top:35px;width:1px;height:35px;background:#252526;"></div><svg style="left:1762.5px;top:45.5px" width="13" height="12" viewBox="0 0 13 12"><path d="M7.75 2.95 A3.95 3.95 0 1 0 7.75 8.65" fill="none" stroke="#519aba" stroke-width="2.7"/><path d="M4.7 5.8 H7.9 M6.3 4.2 V7.4 M8.4 5.8 H11.6 M10 4.2 V7.4" fill="none" stroke="#519aba" stroke-width="1.15"/></svg><svg style="left:449px;top:47.5px" width="10" height="10" viewBox="0 0 10 10"><path d="M0.5 0.5 L9.5 9.5 M9.5 0.5 L0.5 9.5" stroke="#e8e8e8" stroke-width="1.2"/></svg></div></div>
<svg style="left:1771px;top:43px" width="18" height="18" viewBox="0 0 18 18" fill="none" stroke="#cccccc" stroke-width="1.1" stroke-linejoin="round" stroke-linecap="round"><path d="M4.5 7 V2.5 L15 8.8 L10 11.8"/><ellipse cx="5" cy="13" rx="2.3" ry="3"/><path d="M5 10 V16 M2.7 13 H0.8 M7.3 13 H9.2 M3.2 10.8 L1.5 9.3 M6.8 10.8 L8.5 9.3 M3.2 15.2 L1.5 16.7 M6.8 15.2 L8.5 16.7"/></svg>
<svg style="left:1791px;top:48px" width="10" height="10" viewBox="0 0 10 10"><path d="M1 3 L5 7 L9 3" fill="none" stroke="#cccccc" stroke-width="1.1"/></svg>
<svg style="left:1811px;top:44.5px" width="16" height="16" viewBox="0 0 24 24" fill="none" stroke="#cccccc" stroke-width="1.7" stroke-linejoin="round"><circle cx="12" cy="12" r="2.6"/><path d="M10.3 2.5 H13.7 L14.3 5.4 L16.6 6.7 L19.4 5.8 L21.1 8.7 L18.9 10.7 V13.3 L21.1 15.3 L19.4 18.2 L16.6 17.3 L14.3 18.6 L13.7 21.5 H10.3 L9.7 18.6 L7.4 17.3 L4.6 18.2 L2.9 15.3 L5.1 13.3 V10.7 L2.9 8.7 L4.6 5.8 L7.4 6.7 L9.7 5.4 Z"/></svg>
<svg style="left:1836.5px;top:44px" width="17" height="17" viewBox="0 0 24 24"><path d="M22.2819 9.8211a5.9847 5.9847 0 0 0-.5157-4.9108 6.0462 6.0462 0 0 0-6.5098-2.9A6.0651 6.0651 0 0 0 4.9807 4.1818a5.9847 5.9847 0 0 0-3.9977 2.9 6.0462 6.0462 0 0 0 .7427 7.0966 5.98 5.98 0 0 0 .511 4.9107 6.051 6.051 0 0 0 6.5146 2.9001A5.9847 5.9847 0 0 0 13.2599 24a6.0557 6.0557 0 0 0 5.7718-4.2058 5.9894 5.9894 0 0 0 3.9977-2.9001 6.0557 6.0557 0 0 0-.7475-7.0729zm-9.022 12.6081a4.4755 4.4755 0 0 1-2.8764-1.0408l.1419-.0804 4.7783-2.7582a.7948.7948 0 0 0 .3927-.6813v-6.7369l2.02 1.1686a.071.071 0 0 1 .038.052v5.5826a4.504 4.504 0 0 1-4.4945 4.4944zm-9.6607-4.1254a4.4708 4.4708 0 0 1-.5346-3.0137l.142.0852 4.783 2.7582a.7712.7712 0 0 0 .7806 0l5.8428-3.3685v2.3324a.0804.0804 0 0 1-.0332.0615L9.74 19.9502a4.4992 4.4992 0 0 1-6.1408-1.6464zM2.3408 7.8956a4.485 4.485 0 0 1 2.3655-1.9728V11.6a.7664.7664 0 0 0 .3879.6765l5.8144 3.3543-2.0201 1.1685a.0757.0757 0 0 1-.071 0l-4.8303-2.7865A4.504 4.504 0 0 1 2.3408 7.872zm16.5963 3.8558L13.1038 8.364 15.1192 7.2a.0757.0757 0 0 1 .071 0l4.8303 2.7913a4.4944 4.4944 0 0 1-.6765 8.1042v-5.6772a.79.79 0 0 0-.407-.667zm2.0107-3.0231l-.142-.0852-4.7735-2.7818a.7759.7759 0 0 0-.7854 0L9.409 9.2297V6.8974a.0662.0662 0 0 1 .0284-.0615l4.8303-2.7866a4.4992 4.4992 0 0 1 6.6802 4.66zM8.3065 12.863l-2.02-1.1638a.0804.0804 0 0 1-.038-.0567V6.0742a4.4992 4.4992 0 0 1 7.3757-3.4537l-.142.0805L8.704 5.459a.7948.7948 0 0 0-.3927.6813zm1.0976-2.3654l2.602-1.4998 2.6069 1.4998v2.9994l-2.5974 1.4997-2.6067-1.4997Z" fill="#cccccc"/></svg>
<svg style="left:1863px;top:44.5px" width="16" height="16" viewBox="0 0 16 16" fill="none" stroke="#cccccc" stroke-width="1.1" stroke-linejoin="round" stroke-linecap="round"><rect x="1.5" y="1.5" width="13" height="13" rx="1.5"/><path d="M8 1.5 V14.5"/></svg>
<svg style="left:1891.5px;top:51px" width="11" height="4" viewBox="0 0 11 4"><circle cx="1.3" cy="2" r="1.1" fill="#cccccc"/><circle cx="5.5" cy="2" r="1.1" fill="#cccccc"/><circle cx="9.7" cy="2" r="1.1" fill="#cccccc"/></svg>
<span class="t" style="left:364px;top:71.5px;line-height:19px;font-size:13px;color:#a9a9a9;letter-spacing:-0.070px;">kernel</span>
<svg style="left:402px;top:76px" width="11" height="11" viewBox="0 0 11 11"><path d="M3 0.8 L7.7 5.5 L3 10.2" fill="none" stroke="#a0a0a0" stroke-width="1.1"/></svg>
<span class="t" style="left:415px;top:71.5px;line-height:19px;font-size:13px;color:#a9a9a9;letter-spacing:-0.431px;">syscall</span>
<svg style="left:455px;top:76px" width="11" height="11" viewBox="0 0 11 11"><path d="M3 0.8 L7.7 5.5 L3 10.2" fill="none" stroke="#a0a0a0" stroke-width="1.1"/></svg>
<span class="t" style="left:467.5px;top:71.5px;line-height:19px;font-size:13px;color:#a9a9a9;letter-spacing:-0.340px;">xapi</span>
<svg style="left:494px;top:76px" width="11" height="11" viewBox="0 0 11 11"><path d="M3 0.8 L7.7 5.5 L3 10.2" fill="none" stroke="#a0a0a0" stroke-width="1.1"/></svg>
<svg style="left:512px;top:75.2px" width="13" height="12" viewBox="0 0 13 12"><path d="M7.75 2.95 A3.95 3.95 0 1 0 7.75 8.65" fill="none" stroke="#519aba" stroke-width="2.7"/><path d="M4.7 5.8 H7.9 M6.3 4.2 V7.4 M8.4 5.8 H11.6 M10 4.2 V7.4" fill="none" stroke="#519aba" stroke-width="1.15"/></svg>
<span class="t" style="left:529px;top:71.5px;line-height:19px;font-size:13px;color:#a9a9a9;letter-spacing:-0.053px;">xgui.cpp</span>
<svg style="left:580.5px;top:76px" width="11" height="11" viewBox="0 0 11 11"><path d="M3 0.8 L7.7 5.5 L3 10.2" fill="none" stroke="#a0a0a0" stroke-width="1.1"/></svg>
<svg style="left:593px;top:72.7px" width="16" height="16" viewBox="0 0 16 16" fill="none" stroke="#b180d7" stroke-width="1.1" stroke-linejoin="round"><path d="M8 1.5 L14 4.5 V11.5 L8 14.5 L2 11.5 V4.5 Z M2 4.5 L8 7.5 L14 4.5 M8 7.5 V14.5"/></svg>
<span class="t" style="left:612px;top:71.5px;line-height:19px;font-size:13px;color:#a9a9a9;letter-spacing:-0.162px;">do_xapi_DrawBMP(uint64_t, uint32_t, uint32_t, uint32_t, uint32_t, uint64_t)</span>
<div class="a" style="left:0;top:111px;width:1790px;height:631px;overflow:hidden"><div class="a" style="left:0;top:-111px;width:1920px;height:1032px"><div class="a" style="left:416px;top:658px;width:1374px;height:15px;border-top:2px solid #282828;border-bottom:2px solid #282828"></div><div style="position:absolute;left:416px;top:107px;width:1px;height:95px;background:#404040;"></div><div style="position:absolute;left:416px;top:278px;width:1px;height:152px;background:#404040;"></div><div style="position:absolute;left:416px;top:506px;width:1px;height:76px;background:#404040;"></div><div style="position:absolute;left:416px;top:658px;width:1px;height:95px;background:#707070;"></div><div class="a" style="left:416px;top:639px;width:7px;height:18px;border:1px solid #888888;background:#0064001a"></div><div class="ln" style="top:108px">441</div><div class="cl" style="top:108px">    <span class="k">int</span>            ex           = bx + getXsize<span class="b2">(</span>sht_img, WindowHandle-&gt;WindowNodePtr-&gt;w_sheet<span class="b2">)</span>;</div><div class="ln" style="top:127px">442</div><div class="cl" style="top:127px">    <span class="k">int</span>            ey           = by + getYsize<span class="b2">(</span>sht_img, WindowHandle-&gt;WindowNodePtr-&gt;w_sheet<span class="b2">)</span>;</div><div class="ln" style="top:146px">443</div><div class="cl" style="top:146px">    refresh_part_sheet<span class="b2">(</span>sht_img, bx, by, ex, ey<span class="b2">)</span>;</div><div class="ln" style="top:165px">444</div><div class="ln" style="top:184px">445</div><div class="cl" style="top:184px">    <span class="k">return</span> <span class="k">true</span>;</div><div class="ln" style="top:203px">446</div><div class="cl" style="top:203px"><span class="b1">}</span></div><div class="ln" style="top:222px">447</div><div class="ln" style="top:241px">448</div><div class="cl" style="top:241px"><span class="k">int</span> do_xapi_RefreshPartWindow<span class="b1">(</span><span class="ty">uint64_t</span> <span class="p">handle</span>, <span class="ty">uint32_t</span> <span class="p">x1</span>, <span class="ty">uint32_t</span> <span class="p">y1</span>, <span class="ty">uint32_t</span> <span class="p">x2</span>, <span class="ty">uint32_t</span> <span class="p">y2</span><span class="b1">)</span></div><div class="ln" style="top:260px">449</div><div class="cl" style="top:260px"><span class="b1">{</span></div><div class="ln" style="top:279px">450</div><div class="cl" style="top:279px">    <span class="ty">WINDOW_HANDLE</span> *WindowHandle = <span class="b2">(</span><span class="ty">WINDOW_HANDLE</span> *<span class="b2">)</span><span class="b2">(</span><span class="p">handle</span><span class="b2">)</span>;</div><div class="ln" style="top:298px">451</div><div class="cl" style="top:298px">    <span class="k">int</span>            bx           = getBX<span class="b2">(</span>sht_img, WindowHandle-&gt;WindowNodePtr-&gt;w_sheet<span class="b2">)</span> + <span class="p">x1</span>;</div><div class="ln" style="top:317px">452</div><div class="cl" style="top:317px">    <span class="k">int</span>            by           = getBY<span class="b2">(</span>sht_img, WindowHandle-&gt;WindowNodePtr-&gt;w_sheet<span class="b2">)</span> + <span class="p">y1</span>;</div><div class="ln" style="top:336px">453</div><div class="cl" style="top:336px">    <span class="k">int</span>            ex           = getXsize<span class="b2">(</span>sht_img, WindowHandle-&gt;WindowNodePtr-&gt;w_sheet<span class="b2">)</span> + <span class="p">x2</span>;</div><div class="ln" style="top:355px">454</div><div class="cl" style="top:355px">    <span class="k">int</span>            ey           = getYsize<span class="b2">(</span>sht_img, WindowHandle-&gt;WindowNodePtr-&gt;w_sheet<span class="b2">)</span> + <span class="p">y2</span>;</div><div class="ln" style="top:374px">455</div><div class="cl" style="top:374px">    refresh_part_sheet<span class="b2">(</span>sht_img, bx, by, ex, ey<span class="b2">)</span>;</div><div class="ln" style="top:393px">456</div><div class="ln" style="top:412px">457</div><div class="cl" style="top:412px">    <span class="k">return</span> <span class="k">true</span>;</div><div class="ln" style="top:431px">458</div><div class="cl" style="top:431px"><span class="b1">}</span></div><div class="ln" style="top:450px">459</div><div class="ln" style="top:469px">460</div><div class="cl" style="top:469px"><span class="k">int</span> do_xapi_SetMsgProc<span class="b1">(</span><span class="ty">uint64_t</span> <span class="p">handle</span>, <span class="ty">uint64_t</span> <span class="p">func</span><span class="b1">)</span></div><div class="ln" style="top:488px">461</div><div class="cl" style="top:488px"><span class="b1">{</span></div><div class="ln" style="top:507px">462</div><div class="cl" style="top:507px">    <span class="ty">WINDOW_HANDLE</span> *WindowHandle         = <span class="b2">(</span><span class="ty">WINDOW_HANDLE</span> *<span class="b2">)</span><span class="b2">(</span><span class="p">handle</span><span class="b2">)</span>;</div><div class="ln" style="top:526px">463</div><div class="cl" style="top:526px">    WindowHandle-&gt;WindowNodePtr-&gt;WinMPf = <span class="b2">(</span><span class="ty">MsgPrcor</span><span class="b2">)</span><span class="b2">(</span><span class="p">func</span><span class="b2">)</span>;</div><div class="ln" style="top:545px">464</div><div class="ln" style="top:564px">465</div><div class="cl" style="top:564px">    <span class="k">return</span> <span class="k">true</span>;</div><div class="ln" style="top:583px">466</div><div class="cl" style="top:583px"><span class="b1">}</span></div><div class="ln" style="top:602px">467</div><div class="ln" style="top:621px">468</div><div class="cl" style="top:621px"><span class="k">void</span> do_xapi_DrawBMP<span class="b1">(</span><span class="ty">uint64_t</span> <span class="p">handle</span>, <span class="ty">uint32_t</span> <span class="p">x</span>, <span class="ty">uint32_t</span> <span class="p">y</span>, <span class="ty">uint32_t</span> <span class="p">width</span>, <span class="ty">uint32_t</span> <span class="p">height</span>, <span class="ty">uint64_t</span> <span class="p">path</span><span class="b1">)</span></div><div class="ln" style="top:640px">469</div><div class="cl" style="top:640px"><span class="b1">{</span></div><div class="ln" style="top:659px">470</div><div class="cl" style="top:659px">    <span class="ty">WINDOW_HANDLE</span> *WindowHandle = <span class="b2">(</span><span class="ty">WINDOW_HANDLE</span> *<span class="b2">)</span><span class="b2">(</span><span class="p">handle</span><span class="b2">)</span>;</div><div class="ln" style="top:678px">471</div><div class="cl" style="top:678px">    <span class="k">char</span>          *filepath     = <span class="b2">(</span><span class="k">char</span> *<span class="b2">)</span><span class="b2">(</span><span class="p">path</span><span class="b2">)</span>;</div><div class="ln" style="top:697px">472</div><div class="ln" style="top:716px">473</div><div class="cl" style="top:716px">    <span class="k">if</span> <span class="b2">(</span>WindowHandle-&gt;WindowNodePtr-&gt;type == <span class="m">XWIN_NORMAL</span><span class="b2">)</span></div><div class="ln" style="top:735px">474</div><div class="cl" style="top:735px">    <span class="b2">{</span></div></div></div>
<div style="position:absolute;left:348px;top:92px;width:1442px;height:19px;background:#1e1e1e;"></div>
<div class="ln" style="top:93px">436</div><div class="cl" style="top:93px"><span class="k">int</span> do_xapi_RefreshWindow<span class="b1">(</span><span class="ty">uint64_t</span> <span class="p">handle</span><span class="b1">)</span></div>
<div class="a" style="left:348px;top:111px;width:1442px;height:3px;background:linear-gradient(#000000cc,#00000000)"></div>
<div style="position:absolute;left:348px;top:110px;width:1442px;height:1px;background:#141414;"></div>
<span class="t" style="left:368px;top:753.5px;line-height:17px;font-size:11px;color:#969696;">问题</span>
<div class="a" style="left:394px;top:753px;width:26px;height:17px;border-radius:9px;background:#007acc"></div>
<span class="t" style="left:398.5px;top:753px;line-height:17px;font-size:11px;color:#ffffff;letter-spacing:-0.286px;">274</span>
<span class="t" style="left:441.5px;top:753.5px;line-height:17px;font-size:11px;color:#969696;">输出</span>
<span class="t" style="left:488px;top:753.5px;line-height:17px;font-size:11px;color:#969696;">调试控制台</span>
<span class="t" style="left:567px;top:753.5px;line-height:17px;font-size:11px;color:#e7e7e7;">终端</span>
<div style="position:absolute;left:565px;top:772px;width:26px;height:1px;background:#e7e7e7;"></div>
<span class="t" style="left:612.5px;top:753.5px;line-height:17px;font-size:11px;color:#969696;">端口</span>
<svg style="left:1688px;top:754px" width="15" height="15" viewBox="0 0 15 15" fill="none" stroke="#cccccc" stroke-width="1.1" stroke-linejoin="round" stroke-linecap="round"><path d="M7.5 1 V14 M1 7.5 H14"/></svg>
<svg style="left:1708px;top:757px" width="10" height="10" viewBox="0 0 10 10"><path d="M1 3 L5 7 L9 3" fill="none" stroke="#cccccc" stroke-width="1.1"/></svg>
<svg style="left:1727px;top:753.5px" width="16" height="16" viewBox="0 0 16 16" fill="none" stroke="#cccccc" stroke-width="1.1" stroke-linejoin="round" stroke-linecap="round"><rect x="1.5" y="1.5" width="13" height="13" rx="1.5"/><path d="M4 4.5 L7 7.5 L4 10.5 M7.5 11 H11.5"/></svg>
<span class="t" style="left:1747px;top:753.5px;line-height:17px;font-size:11px;color:#cccccc;letter-spacing:-0.297px;">wsl</span>
<svg style="left:1772px;top:753.5px" width="16" height="16" viewBox="0 0 16 16" fill="none" stroke="#cccccc" stroke-width="1.1" stroke-linejoin="round" stroke-linecap="round"><rect x="1.5" y="1.5" width="13" height="13" rx="1.5"/><path d="M8 1.5 V14.5"/></svg>
<svg style="left:1798px;top:753.5px" width="16" height="16" viewBox="0 0 16 16" fill="none" stroke="#cccccc" stroke-width="1.1" stroke-linejoin="round" stroke-linecap="round"><path d="M2 4 H14 M5.5 4 V2.5 Q5.5 1.5 6.5 1.5 H9.5 Q10.5 1.5 10.5 2.5 V4 M3.5 4 L4.2 13.5 Q4.3 14.5 5.3 14.5 H10.7 Q11.7 14.5 11.8 13.5 L12.5 4 M6.5 6.5 V12 M9.5 6.5 V12"/></svg>
<svg style="left:1826.5px;top:760px" width="11" height="4" viewBox="0 0 11 4"><circle cx="1.3" cy="2" r="1.1" fill="#cccccc"/><circle cx="5.5" cy="2" r="1.1" fill="#cccccc"/><circle cx="9.7" cy="2" r="1.1" fill="#cccccc"/></svg>
<div style="position:absolute;left:1851px;top:754px;width:1px;height:15px;background:#5a5a5a;"></div>
<svg style="left:1864px;top:754.5px" width="14" height="14" viewBox="0 0 14 14" fill="none" stroke="#cccccc" stroke-width="1.1" stroke-linejoin="round" stroke-linecap="round"><path d="M1.5 4.5 V1.5 H4.5 M9.5 1.5 H12.5 V4.5 M12.5 9 V12 H9.5 M4.5 12 H1.5 V9"/></svg>
<svg style="left:1892px;top:756px" width="11" height="11" viewBox="0 0 11 11"><path d="M0.5 0.5 L10.5 10.5 M10.5 0.5 L0.5 10.5" stroke="#cccccc" stroke-width="1.1"/></svg>
<div class="tl" style="top:790.5px;">1+0 records in</div>
<div class="tl" style="top:807.5px;">1+0 records out</div>
<div class="tl" style="top:824.5px;">134217728 bytes (134 MB, 128 MiB) copied, 0.430845 s, 312 MB/s</div>
<div class="tl" style="top:841.5px;">Creating new GPT entries in memory.</div>
<div class="tl" style="top:858.5px;">Warning: The kernel is still using the old partition table.</div>
<div class="tl" style="top:875.5px;">The new table will be used at the next reboot or after you</div>
<div class="tl" style="top:892.5px;">run partprobe(8) or kpartx(8)</div>
<div class="tl" style="top:909.5px;">The operation has completed successfully.</div>
<div class="tl" style="top:926.5px;">mkfs.fat 4.2 (2021-01-31)</div>
<div class="tl" style="top:943.5px;">Warning: block count mismatch: found 130048 but assuming 129024.</div>
<div class="tl" style="top:960.5px;color:#f5f543;-webkit-text-stroke:0.55px">[W][00497.295714] pw.conf      | [          conf.c: 1031 try_load_conf()] can't load config client.conf: No such file or directory</div>
<div class="tl" style="top:977.5px;color:#f14c4c;-webkit-text-stroke:0.45px">[E][00497.295778] pw.conf      | [          conf.c: 1060 pw_conf_load_conf_for_context()] can't load config client.conf: No such file or directory</div>
<div class="tl" style="top:994.5px"><span style="color:#23d18b;-webkit-text-stroke:0.5px">guoqifish@LAPTOP-8CRJ3UT6</span>:<span style="color:#3b8eea;-webkit-text-stroke:0.5px">/mnt/c/XJ380/XJ380</span>$ </div>
<div class="a" style="left:690px;top:995px;width:5px;height:13px;border:1px solid #cccccc"></div>
<div class="a" style="left:1906px;top:789px;width:13px;height:221px;background:#202020;border-left:1px solid #3c3c3c;border-top:1px solid #3c3c3c"></div>
<svg style="left:10px;top:1013px" width="14" height="16" viewBox="0 0 14 16" fill="none" stroke="#ffffff" stroke-width="1.1" stroke-linejoin="round" stroke-linecap="round"><path d="M1.5 6.5 L5.5 10.5 L1.5 14.5 M11.5 1.5 L7.5 5.5 L11.5 9.5" stroke-width="1.3"/></svg>
<svg style="left:41px;top:1013px" width="14" height="16" viewBox="0 0 14 16" fill="none" stroke="#ffffff" stroke-width="1.1" stroke-linejoin="round" stroke-linecap="round"><circle cx="3.5" cy="3" r="1.9"/><circle cx="3.5" cy="13" r="1.9"/><circle cx="10.5" cy="6" r="1.9"/><path d="M3.5 5 V11 M10.5 8 Q10.5 10.5 7 10.5 H3.5"/></svg>
<span class="t" style="left:60px;top:1012.5px;line-height:18px;font-size:12px;color:#ffffff;letter-spacing:-0.951px;">XSK2.1</span>
<svg style="left:102px;top:1013.5px" width="15" height="15" viewBox="0 0 15 15" fill="none" stroke="#ffffff" stroke-width="1.1" stroke-linejoin="round" stroke-linecap="round"><path d="M2.2 6.5 A5.3 5.3 0 0 1 11.8 4.2 M12.8 8.5 A5.3 5.3 0 0 1 3.2 10.8 M12 1.2 V4.4 H8.8 M3 13.8 V10.6 H6.2"/></svg>
<svg style="left:133.5px;top:1013.5px" width="15" height="15" viewBox="0 0 15 15" fill="none" stroke="#ffffff" stroke-width="1.1" stroke-linejoin="round" stroke-linecap="round"><circle cx="7.5" cy="7.5" r="6.3"/><path d="M5 5 L10 10 M10 5 L5 10"/></svg>
<span class="t" style="left:153px;top:1012.5px;line-height:18px;font-size:12px;color:#ffffff;letter-spacing:-0.344px;">274</span>
<svg style="left:176px;top:1013.5px" width="15" height="15" viewBox="0 0 15 15" fill="none" stroke="#ffffff" stroke-width="1.1" stroke-linejoin="round" stroke-linecap="round"><path d="M7.5 1.5 L14 13.5 H1 Z M7.5 6 V9.8 M7.5 11.3 V11.9"/></svg>
<span class="t" style="left:194.5px;top:1012.5px;line-height:18px;font-size:12px;color:#ffffff;letter-spacing:-0.188px;">0</span>
<svg style="left:218px;top:1013.5px" width="15" height="15" viewBox="0 0 15 15" fill="none" stroke="#ffffff" stroke-width="1.1" stroke-linejoin="round" stroke-linecap="round"><path d="M2 7.5 A5.6 5.6 0 1 0 4 3.2 M1 2 V5 H4 M7.5 4.5 V8 L10 9.5"/></svg>
<span class="t" style="left:236px;top:1012.5px;line-height:18px;font-size:12px;color:#ffffff;letter-spacing:-0.005px;">4h 10m</span>
<svg style="left:1349px;top:1013px" width="12" height="16" viewBox="0 0 12 16" fill="none" stroke="#ffffff" stroke-width="1.1" stroke-linejoin="round" stroke-linecap="round"><circle cx="6" cy="8" r="2.6"/><path d="M6 1.5 V5.4 M6 10.6 V14.5"/></svg>
<span class="t" style="left:1367px;top:1012.5px;line-height:18px;font-size:12px;color:#ffffff;letter-spacing:-0.042px;">Code-Cube114 (2 个月前)</span>
<span class="t" style="left:1519.5px;top:1012.5px;line-height:18px;font-size:12px;color:#ffffff;letter-spacing:-0.155px;">行 470，列 61</span>
<span class="t" style="left:1610px;top:1012.5px;line-height:18px;font-size:12px;color:#ffffff;letter-spacing:-0.069px;">空格: 4</span>
<span class="t" style="left:1662.5px;top:1012.5px;line-height:18px;font-size:12px;color:#ffffff;letter-spacing:-0.300px;">UTF-8</span>
<span class="t" style="left:1710.5px;top:1012.5px;line-height:18px;font-size:12px;color:#ffffff;letter-spacing:-1.200px;">CRLF</span>
<span class="t" style="left:1753.5px;top:1010px;line-height:20px;font-size:14px;color:#ffffff;letter-spacing:1.500px;-webkit-text-stroke:0.4px;">{}</span>
<span class="t" style="left:1775px;top:1012.5px;line-height:18px;font-size:12px;color:#ffffff;letter-spacing:0.104px;">C++</span>
<svg style="left:1813px;top:1012.5px" width="19" height="17" viewBox="0 0 19 17" fill="none" stroke="#ffffff" stroke-width="1.1" stroke-linejoin="round" stroke-linecap="round"><path d="M3.5 6.5 Q3.5 2.5 7.5 2.5 Q9.5 2.5 9.5 4.5 Q9.5 2.5 11.5 2.5 Q15.5 2.5 15.5 6.5 M2 8 Q1 9 1.5 11.5 Q4 14.5 9.5 14.5 Q15 14.5 17.5 11.5 Q18 9 17 8 M7 9.5 V11.5 M12 9.5 V11.5 M2.5 1.5 L16.5 15.5" stroke-width="1.2"/></svg>
<span class="t" style="left:1847px;top:1012.5px;line-height:18px;font-size:12px;color:#ffffff;letter-spacing:-0.203px;">Win32</span>
<svg style="left:1896px;top:1013px" width="16" height="16" viewBox="0 0 16 16" fill="none" stroke="#ffffff" stroke-width="1.1" stroke-linejoin="round" stroke-linecap="round"><path d="M8 1.5 Q12 1.5 12 6 V9.5 L13.8 12.2 H2.2 L4 9.5 V6 Q4 1.5 8 1.5 Z M6.3 12.5 Q6.5 14.3 8 14.3 Q9.5 14.3 9.7 12.5"/></svg>
<svg style="left:0;top:0" width="1920" height="745" viewBox="0 0 1920 745" fill="none" stroke-width="1.5"><rect x="1794" y="278" width="112" height="2" fill="#8a1515" stroke="none"/><path d="M1798 278.8h13M1813 278.8h3M1826 278.8h13M1841 278.8h7" stroke="#ff2a1a" stroke-width="1.6"/><rect x="1794" y="344" width="112" height="2" fill="#8a1515" stroke="none"/><path d="M1798 344.8h13M1813 344.8h3M1826 344.8h13M1841 344.8h7" stroke="#ff2a1a" stroke-width="1.6"/><path d="M1797.9 95h5.7M1804.7 95h3.7M1794.0 125h2.8M1797.9 131h2.8M1827.0 131h4.7M1797.9 135h1.8M1797.9 149h3.7M1797.9 163h5.7M1804.7 163h3.7M1794.0 171h2.8M1797.9 177h2.8M1827.0 177h4.7M1797.9 191h1.8M1797.9 205h3.7M1797.9 219h5.7M1804.7 219h3.7M1794.0 227h2.8M1797.9 233h2.8M1827.0 233h4.7M1797.9 237h1.8M1797.9 251h3.7M1797.9 265h5.7M1804.7 265h3.7M1794.0 273h3.7M1797.9 285h2.8M1797.9 287h2.8M1797.9 289h1.8M1801.8 293h2.8M1806.6 293h2.8M1805.6 297h2.8M1810.5 297h2.8M1797.9 311h3.7M1801.8 315h2.8M1806.6 315h2.8M1805.6 319h2.8M1810.5 319h2.8M1794.0 339h3.7M1797.9 353h2.8M1797.9 355h2.8M1797.9 357h1.8M1801.8 361h2.8M1806.6 361h2.8M1805.6 365h2.8M1810.5 365h2.8M1797.9 379h3.7M1801.8 383h2.8M1806.6 383h2.8M1805.6 387h2.8M1810.5 387h2.8M1794.0 407h3.7M1797.9 415h2.8M1797.9 417h2.8M1797.9 419h1.8M1801.8 423h2.8M1806.6 423h2.8M1805.6 427h2.8M1810.5 427h2.8M1797.9 441h3.7M1801.8 445h2.8M1806.6 445h2.8M1805.6 449h2.8M1810.5 449h2.8M1794.0 467h3.7M1797.9 473h2.8M1797.9 475h2.8M1797.9 477h1.8M1801.8 481h2.8M1806.6 481h2.8M1805.6 485h2.8M1810.5 485h2.8M1797.9 499h3.7M1801.8 503h2.8M1806.6 503h2.8M1805.6 507h2.8M1810.5 507h2.8M1794.0 525h2.8M1797.9 531h2.8M1797.9 533h2.8M1797.9 535h2.8M1797.9 537h2.8M1797.9 543h5.7M1804.7 543h3.7M1794.0 549h2.8M1797.9 555h2.8M1797.9 557h2.8M1797.9 559h2.8M1797.9 561h2.8M1797.9 567h5.7M1804.7 567h3.7M1794.0 573h2.8M1797.9 583h5.7M1804.7 583h3.7M1794.0 589h3.7M1797.9 595h3.7M1828.0 595h3.7M1797.9 599h1.8M1797.9 607h3.7M1794.0 619h2.8M1797.9 625h3.7M1828.0 625h3.7M1797.9 629h1.8M1797.9 637h3.7M1794.0 649h2.8M1797.9 655h3.7M1828.0 655h3.7M1797.9 659h1.8M1797.9 667h3.7M1794.0 679h2.8M1797.9 685h3.7M1828.0 685h3.7M1797.9 689h1.8M1797.9 697h3.7M1794.0 709h2.8M1797.9 715h3.7M1828.0 715h3.7M1797.9 719h1.8M1797.9 727h3.7M1794.0 739h2.8" stroke="#569cd6" stroke-opacity="0.55"/><path d="M1808.5 95h0.8M1794.0 97h0.8M1797.9 125h16.3M1814.4 125h0.8M1829.9 125h0.8M1841.5 125h0.8M1853.2 125h0.8M1863.8 125h0.8M1864.8 125h0.8M1875.5 125h4.7M1880.3 125h0.8M1891.0 125h3.7M1894.9 125h0.8M1794.0 127h0.8M1811.5 129h0.8M1812.4 129h11.5M1825.0 129h0.8M1827.0 129h0.8M1841.5 129h2.8M1850.3 129h1.8M1812.4 131h2.8M1825.0 131h0.8M1831.8 131h0.8M1800.8 135h0.8M1801.8 135h11.5M1813.4 135h1.8M1815.3 135h12.5M1828.0 135h1.8M1829.9 135h3.7M1834.7 135h1.8M1848.3 135h0.8M1797.9 137h0.8M1801.8 139h2.8M1805.6 139h0.8M1807.6 139h15.4M1823.1 139h0.8M1824.1 139h6.6M1830.9 139h0.8M1832.8 139h11.5M1844.4 139h1.8M1846.4 139h12.5M1859.0 139h1.8M1860.9 139h6.6M1867.7 139h0.8M1871.6 139h0.8M1873.5 139h1.8M1878.4 139h0.8M1880.3 139h2.8M1801.8 141h17.3M1819.2 141h0.8M1820.2 141h6.6M1827.0 141h0.8M1828.9 141h4.7M1833.8 141h0.8M1834.7 141h6.6M1841.5 141h0.8M1843.5 141h11.5M1855.1 141h1.8M1857.0 141h12.5M1869.7 141h1.8M1871.6 141h6.6M1878.4 141h0.8M1880.3 141h0.8M1884.2 141h0.8M1886.2 141h1.8M1812.4 143h0.8M1821.2 143h1.8M1823.1 143h4.7M1828.0 143h0.8M1828.9 143h6.6M1835.7 143h0.8M1837.7 143h0.8M1838.6 143h0.8M1840.6 143h0.8M1844.4 143h0.8M1846.4 143h3.7M1851.2 143h0.8M1860.0 143h1.8M1861.9 143h4.7M1866.8 143h0.8M1867.7 143h6.6M1874.5 143h0.8M1876.5 143h0.8M1877.4 143h0.8M1879.4 143h0.8M1883.2 143h0.8M1885.2 143h2.8M1889.1 143h0.8M1897.8 143h1.8M1899.7 143h4.7M1904.6 143h0.8M1905.5 143h0.5M1812.4 145h0.8M1821.2 145h1.8M1823.1 145h4.7M1828.0 145h1.8M1830.9 145h2.8M1833.8 145h1.8M1797.9 147h0.8M1797.9 151h0.8M1801.8 153h2.8M1805.6 153h0.8M1807.6 153h15.4M1823.1 153h0.8M1824.1 153h6.6M1830.9 153h0.8M1832.8 153h11.5M1844.4 153h1.8M1846.4 153h12.5M1859.0 153h1.8M1860.9 153h6.6M1867.7 153h0.8M1870.6 153h0.8M1873.5 153h0.8M1801.8 155h17.3M1819.2 155h0.8M1820.2 155h6.6M1827.0 155h0.8M1828.9 155h4.7M1833.8 155h0.8M1834.7 155h6.6M1841.5 155h0.8M1843.5 155h11.5M1855.1 155h1.8M1857.0 155h12.5M1869.7 155h1.8M1871.6 155h6.6M1878.4 155h0.8M1880.3 155h0.8M1883.2 155h0.8M1812.4 157h0.8M1821.2 157h1.8M1823.1 157h4.7M1828.0 157h0.8M1828.9 157h6.6M1835.7 157h0.8M1837.7 157h0.8M1838.6 157h0.8M1840.6 157h0.8M1843.5 157h1.8M1846.4 157h0.8M1855.1 157h1.8M1857.0 157h4.7M1861.9 157h0.8M1862.9 157h6.6M1869.7 157h0.8M1871.6 157h0.8M1872.6 157h0.8M1874.5 157h0.8M1878.4 157h0.8M1880.3 157h2.8M1884.2 157h0.8M1892.9 157h1.8M1894.9 157h4.7M1899.7 157h0.8M1900.7 157h5.3M1812.4 159h0.8M1821.2 159h1.8M1823.1 159h4.7M1828.0 159h1.8M1830.9 159h2.8M1833.8 159h1.8M1797.9 161h0.8M1808.5 163h0.8M1794.0 167h0.8M1797.9 171h19.2M1817.3 171h0.8M1832.8 171h0.8M1845.4 171h0.8M1858.0 171h0.8M1870.6 171h0.8M1883.2 171h0.8M1893.9 171h4.7M1898.8 171h0.8M1794.0 173h0.8M1811.5 175h0.8M1812.4 175h11.5M1825.0 175h0.8M1827.0 175h0.8M1841.5 175h2.8M1850.3 175h1.8M1812.4 177h2.8M1825.0 177h0.8M1831.8 177h0.8M1812.4 181h1.8M1825.0 181h0.8M1827.0 181h4.7M1831.8 181h0.8M1832.8 181h6.6M1839.6 181h0.8M1841.5 181h6.6M1848.3 181h1.8M1812.4 183h1.8M1825.0 183h0.8M1827.0 183h4.7M1831.8 183h0.8M1832.8 183h6.6M1839.6 183h0.8M1841.5 183h6.6M1848.3 183h1.8M1812.4 185h1.8M1825.0 185h0.8M1828.9 185h0.8M1843.5 185h0.8M1812.4 187h1.8M1825.0 187h0.8M1828.9 187h0.8M1844.4 187h0.8M1812.4 189h1.8M1825.0 189h0.8M1827.0 189h4.7M1831.8 189h0.8M1832.8 189h6.6M1839.6 189h0.8M1841.5 189h6.6M1848.3 189h1.8M1800.8 191h0.8M1801.8 191h11.5M1813.4 191h1.8M1815.3 191h12.5M1828.0 191h1.8M1829.9 191h3.7M1834.7 191h1.8M1848.3 191h0.8M1797.9 193h0.8M1801.8 195h2.8M1805.6 195h0.8M1807.6 195h14.4M1822.1 195h0.8M1823.1 195h6.6M1829.9 195h0.8M1831.8 195h11.5M1843.5 195h1.8M1845.4 195h12.5M1858.0 195h1.8M1860.0 195h6.6M1866.8 195h0.8M1870.6 195h0.8M1872.6 195h1.8M1877.4 195h0.8M1879.4 195h2.8M1801.8 197h17.3M1819.2 197h0.8M1820.2 197h6.6M1827.0 197h0.8M1828.9 197h4.7M1833.8 197h0.8M1834.7 197h6.6M1841.5 197h0.8M1843.5 197h11.5M1855.1 197h1.8M1857.0 197h12.5M1869.7 197h1.8M1871.6 197h6.6M1878.4 197h0.8M1880.3 197h0.8M1884.2 197h0.8M1886.2 197h1.8M1812.4 199h0.8M1821.2 199h1.8M1823.1 199h4.7M1828.0 199h0.8M1828.9 199h6.6M1835.7 199h0.8M1837.7 199h0.8M1838.6 199h0.8M1840.6 199h0.8M1844.4 199h0.8M1846.4 199h3.7M1851.2 199h0.8M1860.0 199h1.8M1861.9 199h4.7M1866.8 199h0.8M1867.7 199h6.6M1874.5 199h0.8M1876.5 199h0.8M1877.4 199h0.8M1879.4 199h0.8M1883.2 199h0.8M1885.2 199h2.8M1889.1 199h0.8M1897.8 199h1.8M1899.7 199h4.7M1904.6 199h0.8M1905.5 199h0.5M1812.4 201h0.8M1821.2 201h1.8M1823.1 201h4.7M1828.0 201h1.8M1830.9 201h2.8M1833.8 201h1.8M1797.9 203h0.8M1797.9 207h0.8M1801.8 209h2.8M1805.6 209h0.8M1807.6 209h14.4M1822.1 209h0.8M1823.1 209h6.6M1829.9 209h0.8M1831.8 209h11.5M1843.5 209h1.8M1845.4 209h12.5M1858.0 209h1.8M1860.0 209h6.6M1866.8 209h0.8M1869.7 209h0.8M1872.6 209h0.8M1801.8 211h17.3M1819.2 211h0.8M1820.2 211h6.6M1827.0 211h0.8M1828.9 211h4.7M1833.8 211h0.8M1834.7 211h6.6M1841.5 211h0.8M1843.5 211h11.5M1855.1 211h1.8M1857.0 211h12.5M1869.7 211h1.8M1871.6 211h6.6M1878.4 211h0.8M1880.3 211h0.8M1883.2 211h0.8M1812.4 213h0.8M1821.2 213h1.8M1823.1 213h4.7M1828.0 213h0.8M1828.9 213h6.6M1835.7 213h0.8M1837.7 213h0.8M1838.6 213h0.8M1840.6 213h0.8M1843.5 213h1.8M1846.4 213h0.8M1855.1 213h1.8M1857.0 213h4.7M1861.9 213h0.8M1862.9 213h6.6M1869.7 213h0.8M1871.6 213h0.8M1872.6 213h0.8M1874.5 213h0.8M1878.4 213h0.8M1880.3 213h2.8M1884.2 213h0.8M1892.9 213h1.8M1894.9 213h4.7M1899.7 213h0.8M1900.7 213h5.3M1812.4 215h0.8M1821.2 215h1.8M1823.1 215h4.7M1828.0 215h1.8M1830.9 215h2.8M1833.8 215h1.8M1797.9 217h0.8M1808.5 219h0.8M1794.0 223h0.8M1797.9 227h17.3M1815.3 227h0.8M1830.9 227h0.8M1842.5 227h0.8M1854.1 227h0.8M1864.8 227h0.8M1865.8 227h0.8M1876.5 227h4.7M1881.3 227h0.8M1892.0 227h3.7M1895.8 227h0.8M1794.0 229h0.8M1811.5 231h0.8M1812.4 231h11.5M1825.0 231h0.8M1827.0 231h0.8M1841.5 231h2.8M1850.3 231h1.8M1812.4 233h2.8M1825.0 233h0.8M1831.8 233h0.8M1800.8 237h0.8M1801.8 237h11.5M1813.4 237h1.8M1815.3 237h12.5M1828.0 237h1.8M1829.9 237h3.7M1834.7 237h1.8M1848.3 237h0.8M1797.9 239h0.8M1801.8 241h2.8M1805.6 241h0.8M1807.6 241h16.3M1824.1 241h0.8M1825.0 241h6.6M1831.8 241h0.8M1833.8 241h11.5M1845.4 241h1.8M1847.3 241h12.5M1860.0 241h1.8M1861.9 241h6.6M1868.7 241h0.8M1872.6 241h0.8M1874.5 241h1.8M1879.4 241h0.8M1881.3 241h2.8M1801.8 243h17.3M1819.2 243h0.8M1820.2 243h6.6M1827.0 243h0.8M1828.9 243h4.7M1833.8 243h0.8M1834.7 243h6.6M1841.5 243h0.8M1843.5 243h11.5M1855.1 243h1.8M1857.0 243h12.5M1869.7 243h1.8M1871.6 243h6.6M1878.4 243h0.8M1880.3 243h0.8M1884.2 243h0.8M1886.2 243h1.8M1812.4 245h0.8M1821.2 245h1.8M1823.1 245h4.7M1828.0 245h0.8M1828.9 245h6.6M1835.7 245h0.8M1837.7 245h0.8M1838.6 245h0.8M1840.6 245h0.8M1844.4 245h0.8M1846.4 245h3.7M1851.2 245h0.8M1860.0 245h1.8M1861.9 245h4.7M1866.8 245h0.8M1867.7 245h6.6M1874.5 245h0.8M1876.5 245h0.8M1877.4 245h0.8M1879.4 245h0.8M1883.2 245h0.8M1885.2 245h2.8M1889.1 245h0.8M1897.8 245h1.8M1899.7 245h4.7M1904.6 245h0.8M1905.5 245h0.5M1812.4 247h0.8M1821.2 247h1.8M1823.1 247h4.7M1828.0 247h1.8M1830.9 247h2.8M1833.8 247h1.8M1797.9 249h0.8M1797.9 253h0.8M1801.8 255h2.8M1805.6 255h0.8M1807.6 255h16.3M1824.1 255h0.8M1825.0 255h6.6M1831.8 255h0.8M1833.8 255h11.5M1845.4 255h1.8M1847.3 255h12.5M1860.0 255h1.8M1861.9 255h6.6M1868.7 255h0.8M1871.6 255h0.8M1874.5 255h0.8M1801.8 257h17.3M1819.2 257h0.8M1820.2 257h6.6M1827.0 257h0.8M1828.9 257h4.7M1833.8 257h0.8M1834.7 257h6.6M1841.5 257h0.8M1843.5 257h11.5M1855.1 257h1.8M1857.0 257h12.5M1869.7 257h1.8M1871.6 257h6.6M1878.4 257h0.8M1880.3 257h0.8M1883.2 257h0.8M1812.4 259h0.8M1821.2 259h1.8M1823.1 259h4.7M1828.0 259h0.8M1828.9 259h6.6M1835.7 259h0.8M1837.7 259h0.8M1838.6 259h0.8M1840.6 259h0.8M1843.5 259h1.8M1846.4 259h0.8M1855.1 259h1.8M1857.0 259h4.7M1861.9 259h0.8M1862.9 259h6.6M1869.7 259h0.8M1871.6 259h0.8M1872.6 259h0.8M1874.5 259h0.8M1878.4 259h0.8M1880.3 259h2.8M1884.2 259h0.8M1892.9 259h1.8M1894.9 259h4.7M1899.7 259h0.8M1900.7 259h5.3M1812.4 261h0.8M1821.2 261h1.8M1823.1 261h4.7M1828.0 261h1.8M1830.9 261h2.8M1833.8 261h1.8M1797.9 263h0.8M1808.5 265h0.8M1794.0 269h0.8M1798.8 273h16.3M1815.3 273h0.8M1830.9 273h0.8M1842.5 273h0.8M1854.1 273h0.8M1869.7 273h0.8M1886.2 273h0.8M1900.7 273h0.8M1794.0 275h0.8M1811.5 277h0.8M1812.4 277h11.5M1825.0 277h0.8M1827.0 277h0.8M1841.5 277h2.8M1850.3 277h1.8M1812.4 279h5.7M1825.0 279h0.8M1827.0 279h0.8M1828.0 279h11.5M1839.6 279h0.8M1844.4 279h2.8M1811.5 283h0.8M1812.4 283h3.7M1825.0 283h0.8M1827.0 283h0.8M1839.6 283h2.8M1842.5 283h9.5M1852.2 283h0.8M1853.2 283h6.6M1860.0 283h0.8M1861.9 283h11.5M1873.5 283h1.8M1875.5 283h12.5M1888.1 283h1.8M1890.0 283h6.6M1896.8 283h0.8M1902.6 283h2.8M1812.4 285h1.8M1825.0 285h0.8M1827.0 285h7.6M1834.7 285h0.8M1835.7 285h6.6M1842.5 285h0.8M1844.4 285h11.5M1856.1 285h1.8M1858.0 285h12.5M1870.6 285h1.8M1872.6 285h6.6M1879.4 285h1.8M1812.4 287h1.8M1825.0 287h0.8M1827.0 287h7.6M1834.7 287h0.8M1835.7 287h6.6M1842.5 287h0.8M1844.4 287h11.5M1856.1 287h1.8M1858.0 287h12.5M1870.6 287h1.8M1872.6 287h6.6M1879.4 287h1.8M1800.8 289h0.8M1801.8 289h11.5M1813.4 289h1.8M1815.3 289h12.5M1828.0 289h1.8M1829.9 289h3.7M1834.7 289h1.8M1848.3 289h0.8M1797.9 291h0.8M1805.6 293h0.8M1810.5 293h0.8M1812.4 293h0.8M1814.4 293h1.8M1817.3 293h0.8M1819.2 293h0.8M1827.0 293h0.8M1828.9 293h0.8M1829.9 293h2.8M1801.8 295h0.8M1809.5 297h0.8M1814.4 297h0.8M1816.3 297h0.8M1818.2 297h1.8M1821.2 297h0.8M1823.1 297h0.8M1829.9 297h0.8M1831.8 297h0.8M1832.8 297h2.8M1805.6 299h0.8M1809.5 301h3.7M1813.4 301h1.8M1817.3 301h0.8M1819.2 301h0.8M1821.2 301h0.8M1823.1 301h2.8M1827.0 301h0.8M1828.9 301h1.8M1831.8 301h0.8M1833.8 301h0.8M1836.7 301h0.8M1838.6 301h0.8M1840.6 301h0.8M1842.5 301h2.8M1846.4 301h0.8M1848.3 301h0.8M1849.3 301h3.7M1853.2 301h1.8M1855.1 301h0.8M1857.0 301h0.8M1864.8 301h0.8M1866.8 301h0.8M1867.7 301h0.8M1869.7 301h0.8M1871.6 301h1.8M1874.5 301h1.8M1877.4 301h2.8M1881.3 301h0.8M1883.2 301h3.7M1887.1 301h3.7M1809.5 303h3.7M1813.4 303h1.8M1817.3 303h0.8M1819.2 303h0.8M1821.2 303h0.8M1823.1 303h2.8M1827.0 303h0.8M1828.9 303h1.8M1831.8 303h0.8M1833.8 303h0.8M1836.7 303h0.8M1838.6 303h0.8M1840.6 303h0.8M1842.5 303h2.8M1846.4 303h0.8M1848.3 303h0.8M1849.3 303h3.7M1853.2 303h1.8M1855.1 303h0.8M1857.0 303h0.8M1864.8 303h0.8M1866.8 303h0.8M1867.7 303h0.8M1869.7 303h0.8M1871.6 303h1.8M1874.5 303h1.8M1877.4 303h2.8M1881.3 303h0.8M1805.6 305h0.8M1801.8 307h0.8M1797.9 309h0.8M1797.9 313h0.8M1805.6 315h0.8M1810.5 315h0.8M1812.4 315h0.8M1814.4 315h1.8M1817.3 315h0.8M1819.2 315h0.8M1827.0 315h0.8M1828.9 315h0.8M1829.9 315h2.8M1801.8 317h0.8M1809.5 319h0.8M1814.4 319h0.8M1816.3 319h0.8M1818.2 319h1.8M1821.2 319h0.8M1823.1 319h0.8M1829.9 319h0.8M1831.8 319h0.8M1832.8 319h2.8M1805.6 321h0.8M1809.5 323h3.7M1813.4 323h1.8M1817.3 323h0.8M1819.2 323h0.8M1820.2 323h0.8M1822.1 323h0.8M1824.1 323h1.8M1827.0 323h0.8M1828.9 323h0.8M1831.8 323h0.8M1833.8 323h0.8M1834.7 323h1.8M1837.7 323h0.8M1839.6 323h0.8M1840.6 323h3.7M1844.4 323h1.8M1846.4 323h0.8M1848.3 323h0.8M1856.1 323h0.8M1858.0 323h0.8M1859.0 323h0.8M1860.9 323h0.8M1862.9 323h1.8M1865.8 323h1.8M1868.7 323h2.8M1872.6 323h0.8M1874.5 323h3.7M1878.4 323h3.7M1809.5 325h3.7M1813.4 325h1.8M1817.3 325h0.8M1819.2 325h0.8M1820.2 325h0.8M1822.1 325h0.8M1824.1 325h1.8M1827.0 325h0.8M1828.9 325h0.8M1831.8 325h0.8M1833.8 325h0.8M1834.7 325h1.8M1837.7 325h0.8M1839.6 325h0.8M1840.6 325h3.7M1844.4 325h1.8M1846.4 325h0.8M1848.3 325h0.8M1856.1 325h0.8M1858.0 325h0.8M1859.0 325h0.8M1860.9 325h0.8M1862.9 325h1.8M1865.8 325h1.8M1868.7 325h2.8M1805.6 327h0.8M1801.8 329h0.8M1797.9 331h0.8M1794.0 335h0.8M1798.8 339h16.3M1815.3 339h0.8M1830.9 339h0.8M1842.5 339h0.8M1854.1 339h0.8M1869.7 339h0.8M1886.2 339h0.8M1900.7 339h0.8M1794.0 341h0.8M1811.5 343h0.8M1812.4 343h11.5M1825.0 343h0.8M1827.0 343h0.8M1841.5 343h2.8M1850.3 343h1.8M1812.4 345h5.7M1825.0 345h0.8M1827.0 345h0.8M1828.0 345h11.5M1839.6 345h0.8M1844.4 345h2.8M1811.5 351h0.8M1812.4 351h3.7M1825.0 351h0.8M1827.0 351h0.8M1839.6 351h2.8M1842.5 351h9.5M1852.2 351h0.8M1853.2 351h6.6M1860.0 351h0.8M1861.9 351h11.5M1873.5 351h1.8M1875.5 351h12.5M1888.1 351h1.8M1890.0 351h6.6M1896.8 351h0.8M1902.6 351h2.8M1812.4 353h1.8M1825.0 353h0.8M1827.0 353h7.6M1834.7 353h0.8M1835.7 353h6.6M1842.5 353h0.8M1844.4 353h11.5M1856.1 353h1.8M1858.0 353h12.5M1870.6 353h1.8M1872.6 353h6.6M1879.4 353h1.8M1812.4 355h1.8M1825.0 355h0.8M1827.0 355h7.6M1834.7 355h0.8M1835.7 355h6.6M1842.5 355h0.8M1844.4 355h11.5M1856.1 355h1.8M1858.0 355h12.5M1870.6 355h1.8M1872.6 355h6.6M1879.4 355h1.8M1800.8 357h0.8M1801.8 357h11.5M1813.4 357h1.8M1815.3 357h12.5M1828.0 357h1.8M1829.9 357h3.7M1834.7 357h1.8M1848.3 357h0.8M1797.9 359h0.8M1805.6 361h0.8M1810.5 361h0.8M1812.4 361h0.8M1814.4 361h1.8M1817.3 361h0.8M1819.2 361h0.8M1827.0 361h0.8M1828.9 361h0.8M1829.9 361h2.8M1801.8 363h0.8M1809.5 365h0.8M1814.4 365h0.8M1816.3 365h0.8M1818.2 365h1.8M1821.2 365h0.8M1823.1 365h0.8M1829.9 365h0.8M1831.8 365h0.8M1832.8 365h2.8M1805.6 367h0.8M1809.5 369h3.7M1813.4 369h1.8M1817.3 369h0.8M1819.2 369h0.8M1821.2 369h0.8M1823.1 369h2.8M1827.0 369h0.8M1828.9 369h1.8M1831.8 369h0.8M1833.8 369h0.8M1836.7 369h0.8M1838.6 369h0.8M1840.6 369h0.8M1842.5 369h2.8M1846.4 369h0.8M1848.3 369h0.8M1849.3 369h3.7M1853.2 369h1.8M1855.1 369h0.8M1857.0 369h0.8M1864.8 369h0.8M1866.8 369h0.8M1867.7 369h0.8M1869.7 369h0.8M1871.6 369h1.8M1874.5 369h1.8M1877.4 369h2.8M1881.3 369h0.8M1883.2 369h3.7M1887.1 369h3.7M1809.5 371h3.7M1813.4 371h1.8M1817.3 371h0.8M1819.2 371h0.8M1821.2 371h0.8M1823.1 371h2.8M1827.0 371h0.8M1828.9 371h1.8M1831.8 371h0.8M1833.8 371h0.8M1836.7 371h0.8M1838.6 371h0.8M1840.6 371h0.8M1842.5 371h2.8M1846.4 371h0.8M1848.3 371h0.8M1849.3 371h3.7M1853.2 371h1.8M1855.1 371h0.8M1857.0 371h0.8M1864.8 371h0.8M1866.8 371h0.8M1867.7 371h0.8M1869.7 371h0.8M1871.6 371h1.8M1874.5 371h1.8M1877.4 371h2.8M1881.3 371h0.8M1805.6 373h0.8M1801.8 375h0.8M1797.9 377h0.8M1797.9 381h0.8M1805.6 383h0.8M1810.5 383h0.8M1812.4 383h0.8M1814.4 383h1.8M1817.3 383h0.8M1819.2 383h0.8M1827.0 383h0.8M1828.9 383h0.8M1829.9 383h2.8M1801.8 385h0.8M1809.5 387h0.8M1814.4 387h0.8M1816.3 387h0.8M1818.2 387h1.8M1821.2 387h0.8M1823.1 387h0.8M1829.9 387h0.8M1831.8 387h0.8M1832.8 387h2.8M1805.6 389h0.8M1809.5 391h3.7M1813.4 391h1.8M1817.3 391h0.8M1819.2 391h0.8M1820.2 391h0.8M1822.1 391h0.8M1824.1 391h1.8M1827.0 391h0.8M1828.9 391h0.8M1831.8 391h0.8M1833.8 391h0.8M1834.7 391h1.8M1837.7 391h0.8M1839.6 391h0.8M1840.6 391h3.7M1844.4 391h1.8M1846.4 391h0.8M1848.3 391h0.8M1856.1 391h0.8M1858.0 391h0.8M1859.0 391h0.8M1860.9 391h0.8M1862.9 391h1.8M1865.8 391h1.8M1868.7 391h2.8M1872.6 391h0.8M1874.5 391h3.7M1878.4 391h3.7M1809.5 393h3.7M1813.4 393h1.8M1817.3 393h0.8M1819.2 393h0.8M1820.2 393h0.8M1822.1 393h0.8M1824.1 393h1.8M1827.0 393h0.8M1828.9 393h0.8M1831.8 393h0.8M1833.8 393h0.8M1834.7 393h1.8M1837.7 393h0.8M1839.6 393h0.8M1840.6 393h3.7M1844.4 393h1.8M1846.4 393h0.8M1848.3 393h0.8M1856.1 393h0.8M1858.0 393h0.8M1859.0 393h0.8M1860.9 393h0.8M1862.9 393h1.8M1865.8 393h1.8M1868.7 393h2.8M1805.6 395h0.8M1801.8 397h0.8M1797.9 399h0.8M1794.0 403h0.8M1798.8 407h14.4M1813.4 407h0.8M1828.9 407h0.8M1840.6 407h0.8M1852.2 407h0.8M1867.7 407h0.8M1884.2 407h0.8M1898.8 407h0.8M1794.0 409h0.8M1811.5 411h0.8M1812.4 411h11.5M1825.0 411h0.8M1827.0 411h0.8M1841.5 411h2.8M1850.3 411h1.8M1811.5 413h0.8M1812.4 413h3.7M1825.0 413h0.8M1827.0 413h0.8M1839.6 413h2.8M1842.5 413h9.5M1852.2 413h0.8M1853.2 413h6.6M1860.0 413h0.8M1861.9 413h11.5M1873.5 413h1.8M1875.5 413h12.5M1888.1 413h1.8M1890.0 413h6.6M1896.8 413h0.8M1902.6 413h2.8M1812.4 415h1.8M1825.0 415h0.8M1827.0 415h7.6M1834.7 415h0.8M1835.7 415h6.6M1842.5 415h0.8M1844.4 415h11.5M1856.1 415h1.8M1858.0 415h12.5M1870.6 415h1.8M1872.6 415h6.6M1879.4 415h1.8M1812.4 417h1.8M1825.0 417h0.8M1827.0 417h7.6M1834.7 417h0.8M1835.7 417h6.6M1842.5 417h0.8M1844.4 417h11.5M1856.1 417h1.8M1858.0 417h12.5M1870.6 417h1.8M1872.6 417h6.6M1879.4 417h1.8M1800.8 419h0.8M1801.8 419h11.5M1813.4 419h1.8M1815.3 419h12.5M1828.0 419h1.8M1829.9 419h3.7M1834.7 419h1.8M1848.3 419h0.8M1797.9 421h0.8M1805.6 423h0.8M1810.5 423h0.8M1812.4 423h0.8M1814.4 423h1.8M1817.3 423h0.8M1819.2 423h0.8M1827.0 423h0.8M1828.9 423h0.8M1829.9 423h2.8M1801.8 425h0.8M1809.5 427h0.8M1814.4 427h0.8M1816.3 427h0.8M1818.2 427h1.8M1821.2 427h0.8M1823.1 427h0.8M1829.9 427h0.8M1831.8 427h0.8M1832.8 427h2.8M1805.6 429h0.8M1809.5 431h3.7M1813.4 431h1.8M1817.3 431h0.8M1819.2 431h0.8M1821.2 431h0.8M1823.1 431h2.8M1827.0 431h0.8M1828.9 431h1.8M1831.8 431h0.8M1833.8 431h0.8M1836.7 431h0.8M1838.6 431h0.8M1840.6 431h0.8M1842.5 431h2.8M1846.4 431h0.8M1848.3 431h0.8M1849.3 431h3.7M1853.2 431h1.8M1855.1 431h0.8M1857.0 431h0.8M1859.0 431h2.8M1809.5 433h3.7M1813.4 433h1.8M1817.3 433h0.8M1819.2 433h0.8M1821.2 433h0.8M1823.1 433h2.8M1827.0 433h0.8M1828.9 433h1.8M1831.8 433h0.8M1833.8 433h0.8M1836.7 433h0.8M1838.6 433h0.8M1840.6 433h0.8M1842.5 433h2.8M1846.4 433h0.8M1848.3 433h0.8M1849.3 433h3.7M1853.2 433h0.8M1805.6 435h0.8M1801.8 437h0.8M1797.9 439h0.8M1797.9 443h0.8M1805.6 445h0.8M1810.5 445h0.8M1812.4 445h0.8M1814.4 445h1.8M1817.3 445h0.8M1819.2 445h0.8M1827.0 445h0.8M1828.9 445h0.8M1829.9 445h2.8M1801.8 447h0.8M1809.5 449h0.8M1814.4 449h0.8M1816.3 449h0.8M1818.2 449h1.8M1821.2 449h0.8M1823.1 449h0.8M1829.9 449h0.8M1831.8 449h0.8M1832.8 449h2.8M1805.6 451h0.8M1809.5 453h3.7M1813.4 453h1.8M1817.3 453h0.8M1819.2 453h0.8M1820.2 453h0.8M1822.1 453h0.8M1824.1 453h1.8M1827.0 453h0.8M1828.9 453h0.8M1831.8 453h0.8M1833.8 453h0.8M1834.7 453h1.8M1837.7 453h0.8M1839.6 453h0.8M1840.6 453h3.7M1844.4 453h1.8M1846.4 453h0.8M1848.3 453h0.8M1850.3 453h3.7M1809.5 455h3.7M1813.4 455h1.8M1817.3 455h0.8M1819.2 455h0.8M1820.2 455h0.8M1822.1 455h0.8M1824.1 455h1.8M1827.0 455h0.8M1828.9 455h0.8M1831.8 455h0.8M1833.8 455h0.8M1834.7 455h1.8M1837.7 455h0.8M1839.6 455h0.8M1840.6 455h3.7M1805.6 457h0.8M1801.8 459h0.8M1797.9 461h0.8M1794.0 463h0.8M1798.8 467h14.4M1813.4 467h0.8M1828.9 467h0.8M1840.6 467h0.8M1852.2 467h0.8M1867.7 467h0.8M1884.2 467h0.8M1898.8 467h0.8M1794.0 469h0.8M1811.5 471h0.8M1812.4 471h11.5M1825.0 471h0.8M1827.0 471h0.8M1841.5 471h2.8M1850.3 471h1.8M1812.4 473h1.8M1825.0 473h0.8M1827.0 473h7.6M1834.7 473h0.8M1835.7 473h6.6M1842.5 473h0.8M1844.4 473h11.5M1856.1 473h1.8M1858.0 473h12.5M1870.6 473h1.8M1872.6 473h6.6M1879.4 473h1.8M1812.4 475h1.8M1825.0 475h0.8M1827.0 475h7.6M1834.7 475h0.8M1835.7 475h6.6M1842.5 475h0.8M1844.4 475h11.5M1856.1 475h1.8M1858.0 475h12.5M1870.6 475h1.8M1872.6 475h6.6M1879.4 475h1.8M1800.8 477h0.8M1801.8 477h11.5M1813.4 477h1.8M1815.3 477h12.5M1828.0 477h1.8M1829.9 477h3.7M1834.7 477h1.8M1848.3 477h0.8M1797.9 479h0.8M1805.6 481h0.8M1810.5 481h0.8M1812.4 481h0.8M1814.4 481h1.8M1817.3 481h0.8M1819.2 481h0.8M1827.0 481h0.8M1828.9 481h0.8M1829.9 481h2.8M1801.8 483h0.8M1809.5 485h0.8M1814.4 485h0.8M1816.3 485h0.8M1818.2 485h1.8M1821.2 485h0.8M1823.1 485h0.8M1829.9 485h0.8M1831.8 485h0.8M1832.8 485h2.8M1805.6 487h0.8M1809.5 489h3.7M1813.4 489h1.8M1817.3 489h0.8M1819.2 489h0.8M1821.2 489h0.8M1823.1 489h2.8M1827.0 489h0.8M1828.9 489h1.8M1831.8 489h0.8M1833.8 489h0.8M1836.7 489h0.8M1838.6 489h0.8M1840.6 489h0.8M1842.5 489h2.8M1846.4 489h0.8M1848.3 489h0.8M1849.3 489h3.7M1853.2 489h1.8M1855.1 489h0.8M1857.0 489h0.8M1859.0 489h2.8M1809.5 491h3.7M1813.4 491h1.8M1817.3 491h0.8M1819.2 491h0.8M1821.2 491h0.8M1823.1 491h2.8M1827.0 491h0.8M1828.9 491h1.8M1831.8 491h0.8M1833.8 491h0.8M1836.7 491h0.8M1838.6 491h0.8M1840.6 491h0.8M1842.5 491h2.8M1846.4 491h0.8M1848.3 491h0.8M1849.3 491h3.7M1853.2 491h0.8M1805.6 493h0.8M1801.8 495h0.8M1797.9 497h0.8M1797.9 501h0.8M1805.6 503h0.8M1810.5 503h0.8M1812.4 503h0.8M1814.4 503h1.8M1817.3 503h0.8M1819.2 503h0.8M1827.0 503h0.8M1828.9 503h0.8M1829.9 503h2.8M1801.8 505h0.8M1809.5 507h0.8M1814.4 507h0.8M1816.3 507h0.8M1818.2 507h1.8M1821.2 507h0.8M1823.1 507h0.8M1829.9 507h0.8M1831.8 507h0.8M1832.8 507h2.8M1805.6 509h0.8M1809.5 511h3.7M1813.4 511h1.8M1817.3 511h0.8M1819.2 511h0.8M1820.2 511h0.8M1822.1 511h0.8M1824.1 511h1.8M1827.0 511h0.8M1828.9 511h0.8M1831.8 511h0.8M1833.8 511h0.8M1834.7 511h1.8M1837.7 511h0.8M1839.6 511h0.8M1840.6 511h3.7M1844.4 511h1.8M1846.4 511h0.8M1848.3 511h0.8M1850.3 511h3.7M1809.5 513h3.7M1813.4 513h1.8M1817.3 513h0.8M1819.2 513h0.8M1820.2 513h0.8M1822.1 513h0.8M1824.1 513h1.8M1827.0 513h0.8M1828.9 513h0.8M1831.8 513h0.8M1833.8 513h0.8M1834.7 513h1.8M1837.7 513h0.8M1839.6 513h0.8M1840.6 513h3.7M1805.6 515h0.8M1801.8 517h0.8M1797.9 519h0.8M1794.0 521h0.8M1797.9 525h20.2M1818.2 525h0.8M1833.8 525h0.8M1794.0 527h0.8M1811.5 529h0.8M1812.4 529h11.5M1825.0 529h0.8M1827.0 529h0.8M1841.5 529h2.8M1850.3 529h1.8M1812.4 531h1.8M1825.0 531h0.8M1827.0 531h4.7M1831.8 531h0.8M1832.8 531h6.6M1839.6 531h0.8M1841.5 531h11.5M1853.2 531h1.8M1855.1 531h12.5M1867.7 531h1.8M1869.7 531h6.6M1876.5 531h1.8M1812.4 533h1.8M1825.0 533h0.8M1827.0 533h4.7M1831.8 533h0.8M1832.8 533h6.6M1839.6 533h0.8M1841.5 533h11.5M1853.2 533h1.8M1855.1 533h12.5M1867.7 533h1.8M1869.7 533h6.6M1876.5 533h1.8M1812.4 535h1.8M1825.0 535h0.8M1827.0 535h1.8M1829.9 535h0.8M1831.8 535h7.6M1839.6 535h0.8M1840.6 535h6.6M1847.3 535h0.8M1849.3 535h11.5M1860.9 535h1.8M1862.9 535h12.5M1875.5 535h1.8M1877.4 535h6.6M1884.2 535h1.8M1812.4 537h1.8M1825.0 537h0.8M1827.0 537h1.8M1829.9 537h0.8M1831.8 537h7.6M1839.6 537h0.8M1840.6 537h6.6M1847.3 537h0.8M1849.3 537h11.5M1860.9 537h1.8M1862.9 537h12.5M1875.5 537h1.8M1877.4 537h6.6M1884.2 537h1.8M1797.9 539h17.3M1815.3 539h0.8M1816.3 539h6.6M1823.1 539h0.8M1825.0 539h1.8M1827.0 539h0.8M1828.9 539h1.8M1830.9 539h0.8M1832.8 539h1.8M1834.7 539h0.8M1836.7 539h1.8M1838.6 539h1.8M1808.5 543h0.8M1794.0 545h0.8M1797.9 549h24.1M1822.1 549h0.8M1837.7 549h0.8M1850.3 549h0.8M1862.9 549h0.8M1875.5 549h0.8M1888.1 549h0.8M1794.0 551h0.8M1811.5 553h0.8M1812.4 553h11.5M1825.0 553h0.8M1827.0 553h0.8M1841.5 553h2.8M1850.3 553h1.8M1812.4 555h1.8M1825.0 555h0.8M1827.0 555h4.7M1831.8 555h0.8M1832.8 555h6.6M1839.6 555h0.8M1841.5 555h11.5M1853.2 555h1.8M1855.1 555h12.5M1867.7 555h1.8M1869.7 555h6.6M1876.5 555h0.8M1878.4 555h0.8M1882.3 555h0.8M1812.4 557h1.8M1825.0 557h0.8M1827.0 557h4.7M1831.8 557h0.8M1832.8 557h6.6M1839.6 557h0.8M1841.5 557h11.5M1853.2 557h1.8M1855.1 557h12.5M1867.7 557h1.8M1869.7 557h6.6M1876.5 557h0.8M1878.4 557h0.8M1882.3 557h0.8M1812.4 559h1.8M1825.0 559h0.8M1827.0 559h7.6M1834.7 559h0.8M1835.7 559h6.6M1842.5 559h0.8M1844.4 559h11.5M1856.1 559h1.8M1858.0 559h12.5M1870.6 559h1.8M1872.6 559h6.6M1879.4 559h0.8M1881.3 559h0.8M1885.2 559h0.8M1812.4 561h1.8M1825.0 561h0.8M1827.0 561h7.6M1834.7 561h0.8M1835.7 561h6.6M1842.5 561h0.8M1844.4 561h11.5M1856.1 561h1.8M1858.0 561h12.5M1870.6 561h1.8M1872.6 561h6.6M1879.4 561h0.8M1881.3 561h0.8M1885.2 561h0.8M1797.9 563h17.3M1815.3 563h0.8M1816.3 563h6.6M1823.1 563h0.8M1825.0 563h1.8M1827.0 563h0.8M1828.9 563h1.8M1830.9 563h0.8M1832.8 563h1.8M1834.7 563h0.8M1836.7 563h1.8M1838.6 563h1.8M1808.5 567h0.8M1794.0 569h0.8M1797.9 573h17.3M1815.3 573h0.8M1830.9 573h0.8M1845.4 573h0.8M1794.0 575h0.8M1811.5 577h0.8M1812.4 577h11.5M1832.8 577h0.8M1834.7 577h0.8M1849.3 577h2.8M1858.0 577h1.8M1797.9 579h11.5M1809.5 579h1.8M1811.5 579h12.5M1824.1 579h1.8M1826.0 579h5.7M1832.8 579h0.8M1834.7 579h0.8M1843.5 579h1.8M1849.3 579h1.8M1808.5 583h0.8M1794.0 585h0.8M1798.8 589h14.4M1813.4 589h0.8M1828.9 589h0.8M1840.6 589h0.8M1852.2 589h0.8M1867.7 589h0.8M1884.2 589h0.8M1898.8 589h0.8M1794.0 591h0.8M1811.5 593h0.8M1812.4 593h11.5M1825.0 593h0.8M1827.0 593h0.8M1841.5 593h2.8M1850.3 593h1.8M1811.5 595h0.8M1812.4 595h7.6M1825.0 595h0.8M1827.0 595h0.8M1832.8 595h2.8M1839.6 595h1.8M1800.8 599h0.8M1801.8 599h11.5M1813.4 599h1.8M1815.3 599h12.5M1828.0 599h1.8M1829.9 599h3.7M1834.7 599h1.8M1848.3 599h0.8M1797.9 601h0.8M1801.8 603h15.4M1817.3 603h0.8M1818.2 603h6.6M1825.0 603h0.8M1827.0 603h11.5M1838.6 603h1.8M1840.6 603h12.5M1853.2 603h1.8M1855.1 603h6.6M1861.9 603h0.8M1865.8 603h0.8M1867.7 603h1.8M1872.6 603h0.8M1874.5 603h2.8M1883.2 603h0.8M1891.0 603h0.8M1892.9 603h7.6M1900.7 603h1.8M1797.9 605h0.8M1797.9 609h0.8M1801.8 611h15.4M1817.3 611h0.8M1818.2 611h6.6M1825.0 611h0.8M1827.0 611h11.5M1838.6 611h1.8M1840.6 611h12.5M1853.2 611h1.8M1855.1 611h6.6M1861.9 611h0.8M1864.8 611h0.8M1867.7 611h0.8M1874.5 611h0.8M1882.3 611h0.8M1884.2 611h7.6M1892.0 611h1.8M1797.9 613h0.8M1794.0 615h0.8M1797.9 619h15.4M1813.4 619h0.8M1828.9 619h0.8M1840.6 619h0.8M1852.2 619h0.8M1862.9 619h4.7M1867.7 619h0.8M1878.4 619h2.8M1881.3 619h0.8M1892.0 619h5.7M1897.8 619h0.8M1794.0 621h0.8M1811.5 623h0.8M1812.4 623h11.5M1825.0 623h0.8M1827.0 623h0.8M1841.5 623h2.8M1850.3 623h1.8M1811.5 625h0.8M1812.4 625h3.7M1825.0 625h0.8M1827.0 625h0.8M1832.8 625h2.8M1835.7 625h2.8M1838.6 625h1.8M1800.8 629h0.8M1801.8 629h11.5M1813.4 629h1.8M1815.3 629h12.5M1828.0 629h1.8M1829.9 629h3.7M1834.7 629h1.8M1848.3 629h0.8M1797.9 631h0.8M1801.8 633h15.4M1817.3 633h0.8M1818.2 633h6.6M1825.0 633h0.8M1827.0 633h11.5M1838.6 633h1.8M1840.6 633h12.5M1853.2 633h1.8M1855.1 633h6.6M1861.9 633h0.8M1865.8 633h0.8M1867.7 633h1.8M1872.6 633h0.8M1874.5 633h2.8M1878.4 633h4.7M1883.2 633h0.8M1885.2 633h3.7M1889.1 633h0.8M1891.0 633h5.7M1896.8 633h1.8M1797.9 635h0.8M1797.9 639h0.8M1801.8 641h15.4M1817.3 641h0.8M1818.2 641h6.6M1825.0 641h0.8M1827.0 641h11.5M1838.6 641h1.8M1840.6 641h12.5M1853.2 641h1.8M1855.1 641h6.6M1861.9 641h0.8M1864.8 641h0.8M1867.7 641h0.8M1869.7 641h4.7M1874.5 641h0.8M1876.5 641h3.7M1880.3 641h0.8M1882.3 641h5.7M1888.1 641h1.8M1797.9 643h0.8M1794.0 645h0.8M1797.9 649h17.3M1815.3 649h0.8M1830.9 649h0.8M1842.5 649h0.8M1854.1 649h0.8M1864.8 649h4.7M1869.7 649h0.8M1880.3 649h2.8M1883.2 649h0.8M1893.9 649h5.7M1899.7 649h0.8M1794.0 651h0.8M1811.5 653h0.8M1812.4 653h11.5M1825.0 653h0.8M1827.0 653h0.8M1841.5 653h2.8M1850.3 653h1.8M1811.5 655h0.8M1812.4 655h3.7M1825.0 655h0.8M1827.0 655h0.8M1832.8 655h2.8M1835.7 655h2.8M1838.6 655h1.8M1800.8 659h0.8M1801.8 659h11.5M1813.4 659h1.8M1815.3 659h12.5M1828.0 659h1.8M1829.9 659h3.7M1834.7 659h1.8M1848.3 659h0.8M1797.9 661h0.8M1801.8 663h18.3M1820.2 663h0.8M1821.2 663h6.6M1828.0 663h0.8M1829.9 663h11.5M1841.5 663h1.8M1843.5 663h12.5M1856.1 663h1.8M1858.0 663h6.6M1864.8 663h0.8M1868.7 663h0.8M1870.6 663h1.8M1875.5 663h0.8M1877.4 663h2.8M1881.3 663h4.7M1886.2 663h0.8M1888.1 663h3.7M1892.0 663h0.8M1893.9 663h5.7M1899.7 663h1.8M1797.9 665h0.8M1797.9 669h0.8M1801.8 671h18.3M1820.2 671h0.8M1821.2 671h6.6M1828.0 671h0.8M1829.9 671h11.5M1841.5 671h1.8M1843.5 671h12.5M1856.1 671h1.8M1858.0 671h6.6M1864.8 671h0.8M1867.7 671h0.8M1870.6 671h0.8M1872.6 671h4.7M1877.4 671h0.8M1879.4 671h3.7M1883.2 671h0.8M1885.2 671h5.7M1891.0 671h1.8M1797.9 673h0.8M1794.0 675h0.8M1797.9 679h17.3M1815.3 679h0.8M1830.9 679h0.8M1842.5 679h0.8M1854.1 679h0.8M1864.8 679h4.7M1869.7 679h0.8M1880.3 679h2.8M1883.2 679h0.8M1794.0 681h0.8M1811.5 683h0.8M1812.4 683h11.5M1825.0 683h0.8M1827.0 683h0.8M1841.5 683h2.8M1850.3 683h1.8M1811.5 685h0.8M1812.4 685h3.7M1825.0 685h0.8M1827.0 685h0.8M1832.8 685h2.8M1835.7 685h2.8M1838.6 685h1.8M1800.8 689h0.8M1801.8 689h11.5M1813.4 689h1.8M1815.3 689h12.5M1828.0 689h1.8M1829.9 689h3.7M1834.7 689h1.8M1848.3 689h0.8M1797.9 691h0.8M1801.8 693h17.3M1819.2 693h0.8M1820.2 693h6.6M1827.0 693h0.8M1828.9 693h11.5M1840.6 693h1.8M1842.5 693h12.5M1855.1 693h1.8M1857.0 693h6.6M1863.8 693h0.8M1867.7 693h0.8M1869.7 693h1.8M1874.5 693h0.8M1876.5 693h2.8M1880.3 693h4.7M1885.2 693h0.8M1887.1 693h3.7M1891.0 693h0.8M1892.9 693h5.7M1898.8 693h1.8M1797.9 695h0.8M1797.9 699h0.8M1801.8 701h17.3M1819.2 701h0.8M1820.2 701h6.6M1827.0 701h0.8M1828.9 701h11.5M1840.6 701h1.8M1842.5 701h12.5M1855.1 701h1.8M1857.0 701h6.6M1863.8 701h0.8M1866.8 701h0.8M1869.7 701h0.8M1871.6 701h4.7M1876.5 701h0.8M1878.4 701h3.7M1882.3 701h0.8M1884.2 701h5.7M1890.0 701h1.8M1797.9 703h0.8M1794.0 705h0.8M1797.9 709h19.2M1817.3 709h0.8M1832.8 709h0.8M1844.4 709h0.8M1856.1 709h0.8M1866.8 709h4.7M1871.6 709h0.8M1882.3 709h2.8M1885.2 709h0.8M1794.0 711h0.8M1811.5 713h0.8M1812.4 713h11.5M1825.0 713h0.8M1827.0 713h0.8M1841.5 713h2.8M1850.3 713h1.8M1811.5 715h0.8M1812.4 715h3.7M1825.0 715h0.8M1827.0 715h0.8M1832.8 715h2.8M1835.7 715h2.8M1838.6 715h1.8M1800.8 719h0.8M1801.8 719h11.5M1813.4 719h1.8M1815.3 719h12.5M1828.0 719h1.8M1829.9 719h3.7M1834.7 719h1.8M1848.3 719h0.8M1797.9 721h0.8M1801.8 723h18.3M1820.2 723h0.8M1821.2 723h6.6M1828.0 723h0.8M1829.9 723h11.5M1841.5 723h1.8M1843.5 723h12.5M1856.1 723h1.8M1858.0 723h6.6M1864.8 723h0.8M1868.7 723h0.8M1870.6 723h1.8M1875.5 723h0.8M1877.4 723h2.8M1881.3 723h4.7M1886.2 723h0.8M1888.1 723h3.7M1892.0 723h0.8M1893.9 723h5.7M1899.7 723h1.8M1797.9 725h0.8M1797.9 729h0.8M1801.8 731h18.3M1820.2 731h0.8M1821.2 731h6.6M1828.0 731h0.8M1829.9 731h11.5M1841.5 731h1.8M1843.5 731h12.5M1856.1 731h1.8M1858.0 731h6.6M1864.8 731h0.8M1867.7 731h0.8M1870.6 731h0.8M1872.6 731h4.7M1877.4 731h0.8M1879.4 731h3.7M1883.2 731h0.8M1885.2 731h5.7M1891.0 731h1.8M1797.9 733h0.8M1794.0 735h0.8M1797.9 739h18.3M1816.3 739h0.8M1831.8 739h0.8M1842.5 739h4.7M1847.3 739h0.8M1794.0 741h0.8" stroke="#d8d8d8" stroke-opacity="0.42"/><path d="M1794.0 101h1.8M1796.9 101h2.8M1800.8 101h24.1M1826.0 101h6.6M1833.8 101h7.6M1842.5 101h2.8M1846.4 101h7.6M1855.1 101h2.8M1859.0 101h7.6M1867.7 101h2.8M1871.6 101h7.6M1880.3 101h2.8M1884.2 101h7.6M1892.9 101h5.7M1794.0 103h1.8M1800.8 103h12.5M1814.4 103h12.5M1828.0 103h0.8M1829.9 103h13.4M1844.4 103h10.5M1794.0 105h1.8M1794.0 107h1.8M1800.8 107h23.1M1825.0 107h35.7M1861.9 107h1.8M1864.8 107h0.8M1866.8 107h1.8M1869.7 107h1.8M1872.6 107h0.8M1874.5 107h2.8M1878.4 107h1.8M1881.3 107h0.8M1883.2 107h1.8M1886.2 107h1.8M1889.1 107h0.8M1891.0 107h2.8M1894.9 107h5.7M1901.7 107h2.8M1794.0 109h1.8M1796.9 109h0.8M1794.0 113h1.8M1796.9 113h2.8M1800.8 113h24.1M1826.0 113h6.6M1833.8 113h7.6M1842.5 113h2.8M1846.4 113h7.6M1855.1 113h2.8M1859.0 113h7.6M1867.7 113h2.8M1871.6 113h7.6M1880.3 113h2.8M1884.2 113h7.6M1892.9 113h5.7M1794.0 115h1.8M1800.8 115h12.5M1814.4 115h12.5M1828.0 115h0.8M1829.9 115h13.4M1844.4 115h10.5M1794.0 117h1.8M1794.0 119h1.8M1800.8 119h23.1M1825.0 119h35.7M1861.9 119h1.8M1864.8 119h0.8M1866.8 119h1.8M1869.7 119h1.8M1872.6 119h0.8M1874.5 119h2.8M1878.4 119h1.8M1881.3 119h0.8M1883.2 119h1.8M1886.2 119h1.8M1889.1 119h0.8M1891.0 119h2.8M1894.9 119h5.7M1901.7 119h2.8M1794.0 121h1.8M1796.9 121h0.8" stroke="#57a64a" stroke-opacity="0.45"/><path d="M1815.3 125h7.6M1831.8 125h7.6M1843.5 125h7.6M1855.1 125h7.6M1866.8 125h7.6M1882.3 125h7.6M1797.9 129h12.5M1828.0 129h12.5M1813.4 143h7.6M1852.2 143h7.6M1890.0 143h7.6M1813.4 145h7.6M1813.4 157h7.6M1847.3 157h7.6M1885.2 157h7.6M1813.4 159h7.6M1818.2 171h7.6M1834.7 171h7.6M1847.3 171h7.6M1860.0 171h7.6M1872.6 171h7.6M1885.2 171h7.6M1900.7 171h5.3M1797.9 175h12.5M1828.0 175h12.5M1797.9 181h7.6M1797.9 183h7.6M1797.9 185h7.6M1797.9 187h7.6M1797.9 189h7.6M1813.4 199h7.6M1852.2 199h7.6M1890.0 199h7.6M1813.4 201h7.6M1813.4 213h7.6M1847.3 213h7.6M1885.2 213h7.6M1813.4 215h7.6M1816.3 227h7.6M1832.8 227h7.6M1844.4 227h7.6M1856.1 227h7.6M1867.7 227h7.6M1883.2 227h7.6M1797.9 231h12.5M1828.0 231h12.5M1813.4 245h7.6M1852.2 245h7.6M1890.0 245h7.6M1813.4 247h7.6M1813.4 259h7.6M1847.3 259h7.6M1885.2 259h7.6M1813.4 261h7.6M1816.3 273h7.6M1832.8 273h7.6M1844.4 273h7.6M1856.1 273h7.6M1871.6 273h7.6M1888.1 273h7.6M1797.9 277h12.5M1828.0 277h12.5M1797.9 279h12.5M1797.9 283h10.5M1828.0 283h10.5M1816.3 339h7.6M1832.8 339h7.6M1844.4 339h7.6M1856.1 339h7.6M1871.6 339h7.6M1888.1 339h7.6M1797.9 343h12.5M1828.0 343h12.5M1797.9 345h12.5M1797.9 351h10.5M1828.0 351h10.5M1814.4 407h7.6M1830.9 407h7.6M1842.5 407h7.6M1854.1 407h7.6M1869.7 407h7.6M1886.2 407h7.6M1797.9 411h12.5M1828.0 411h12.5M1797.9 413h10.5M1828.0 413h10.5M1814.4 467h7.6M1830.9 467h7.6M1842.5 467h7.6M1854.1 467h7.6M1869.7 467h7.6M1886.2 467h7.6M1797.9 471h12.5M1828.0 471h12.5M1819.2 525h7.6M1797.9 529h12.5M1828.0 529h12.5M1823.1 549h7.6M1839.6 549h7.6M1852.2 549h7.6M1864.8 549h7.6M1877.4 549h7.6M1797.9 553h12.5M1828.0 553h12.5M1816.3 573h7.6M1832.8 573h7.6M1797.9 577h12.5M1835.7 577h12.5M1835.7 579h7.6M1814.4 589h7.6M1830.9 589h7.6M1842.5 589h7.6M1854.1 589h7.6M1869.7 589h7.6M1886.2 589h7.6M1797.9 593h12.5M1828.0 593h12.5M1814.4 619h7.6M1830.9 619h7.6M1842.5 619h7.6M1854.1 619h7.6M1869.7 619h7.6M1883.2 619h7.6M1797.9 623h12.5M1828.0 623h12.5M1816.3 649h7.6M1832.8 649h7.6M1844.4 649h7.6M1856.1 649h7.6M1871.6 649h7.6M1885.2 649h7.6M1797.9 653h12.5M1828.0 653h12.5M1816.3 679h7.6M1832.8 679h7.6M1844.4 679h7.6M1856.1 679h7.6M1871.6 679h7.6M1797.9 683h12.5M1828.0 683h12.5M1818.2 709h7.6M1834.7 709h7.6M1846.4 709h7.6M1858.0 709h7.6M1873.5 709h7.6M1797.9 713h12.5M1828.0 713h12.5M1817.3 739h7.6M1833.8 739h7.6" stroke="#4ec9b0" stroke-opacity="0.5"/><path d="M1824.1 125h5.7M1840.6 125h0.8M1852.2 125h0.8M1844.4 129h5.7M1869.7 139h0.8M1876.5 139h0.8M1882.3 141h0.8M1842.5 143h0.8M1881.3 143h0.8M1869.7 153h0.8M1872.6 153h0.8M1882.3 155h0.8M1842.5 157h0.8M1876.5 157h0.8M1827.0 171h5.7M1843.5 171h1.8M1856.1 171h1.8M1868.7 171h1.8M1881.3 171h1.8M1844.4 175h5.7M1827.0 185h0.8M1827.0 187h0.8M1868.7 195h0.8M1875.5 195h0.8M1882.3 197h0.8M1842.5 199h0.8M1881.3 199h0.8M1868.7 209h0.8M1871.6 209h0.8M1882.3 211h0.8M1842.5 213h0.8M1876.5 213h0.8M1825.0 227h5.7M1841.5 227h0.8M1853.2 227h0.8M1844.4 231h5.7M1870.6 241h0.8M1877.4 241h0.8M1882.3 243h0.8M1842.5 245h0.8M1881.3 245h0.8M1870.6 255h0.8M1873.5 255h0.8M1882.3 257h0.8M1842.5 259h0.8M1876.5 259h0.8M1825.0 273h5.7M1841.5 273h0.8M1853.2 273h0.8M1864.8 273h4.7M1880.3 273h5.7M1896.8 273h3.7M1844.4 277h5.7M1840.6 279h3.7M1898.8 283h3.7M1821.2 293h5.7M1825.0 297h4.7M1815.3 301h0.8M1834.7 301h0.8M1859.0 301h4.7M1815.3 303h0.8M1834.7 303h0.8M1859.0 303h4.7M1821.2 315h5.7M1825.0 319h4.7M1815.3 323h0.8M1829.9 323h0.8M1850.3 323h4.7M1815.3 325h0.8M1829.9 325h0.8M1850.3 325h4.7M1825.0 339h5.7M1841.5 339h0.8M1853.2 339h0.8M1864.8 339h4.7M1880.3 339h5.7M1896.8 339h3.7M1844.4 343h5.7M1840.6 345h3.7M1898.8 351h3.7M1821.2 361h5.7M1825.0 365h4.7M1815.3 369h0.8M1834.7 369h0.8M1859.0 369h4.7M1815.3 371h0.8M1834.7 371h0.8M1859.0 371h4.7M1821.2 383h5.7M1825.0 387h4.7M1815.3 391h0.8M1829.9 391h0.8M1850.3 391h4.7M1815.3 393h0.8M1829.9 393h0.8M1850.3 393h4.7M1823.1 407h5.7M1839.6 407h0.8M1851.2 407h0.8M1862.9 407h4.7M1878.4 407h5.7M1894.9 407h3.7M1844.4 411h5.7M1898.8 413h3.7M1821.2 423h5.7M1825.0 427h4.7M1815.3 431h0.8M1834.7 431h0.8M1815.3 433h0.8M1834.7 433h0.8M1821.2 445h5.7M1825.0 449h4.7M1815.3 453h0.8M1829.9 453h0.8M1815.3 455h0.8M1829.9 455h0.8M1823.1 467h5.7M1839.6 467h0.8M1851.2 467h0.8M1862.9 467h4.7M1878.4 467h5.7M1894.9 467h3.7M1844.4 471h5.7M1821.2 481h5.7M1825.0 485h4.7M1815.3 489h0.8M1834.7 489h0.8M1815.3 491h0.8M1834.7 491h0.8M1821.2 503h5.7M1825.0 507h4.7M1815.3 511h0.8M1829.9 511h0.8M1815.3 513h0.8M1829.9 513h0.8M1828.0 525h5.7M1844.4 529h5.7M1831.8 549h5.7M1848.3 549h1.8M1860.9 549h1.8M1873.5 549h1.8M1886.2 549h1.8M1844.4 553h5.7M1880.3 555h1.8M1880.3 557h1.8M1883.2 559h1.8M1883.2 561h1.8M1825.0 573h5.7M1841.5 573h3.7M1852.2 577h5.7M1845.4 579h3.7M1823.1 589h5.7M1839.6 589h0.8M1851.2 589h0.8M1862.9 589h4.7M1878.4 589h5.7M1894.9 589h3.7M1844.4 593h5.7M1835.7 595h3.7M1863.8 603h0.8M1870.6 603h0.8M1878.4 603h4.7M1885.2 603h5.7M1863.8 611h0.8M1866.8 611h0.8M1869.7 611h4.7M1876.5 611h5.7M1823.1 619h5.7M1839.6 619h0.8M1851.2 619h0.8M1844.4 623h5.7M1863.8 633h0.8M1870.6 633h0.8M1863.8 641h0.8M1866.8 641h0.8M1825.0 649h5.7M1841.5 649h0.8M1853.2 649h0.8M1844.4 653h5.7M1866.8 663h0.8M1873.5 663h0.8M1866.8 671h0.8M1869.7 671h0.8M1825.0 679h5.7M1841.5 679h0.8M1853.2 679h0.8M1844.4 683h5.7M1865.8 693h0.8M1872.6 693h0.8M1865.8 701h0.8M1868.7 701h0.8M1827.0 709h5.7M1843.5 709h0.8M1855.1 709h0.8M1844.4 713h5.7M1866.8 723h0.8M1873.5 723h0.8M1866.8 731h0.8M1869.7 731h0.8M1826.0 739h5.7" stroke="#9a9a9a" stroke-opacity="0.4"/><path d="M1837.7 135h10.5M1830.9 185h12.5M1830.9 187h13.4M1837.7 191h10.5M1837.7 237h10.5M1837.7 289h10.5M1837.7 357h10.5M1837.7 419h10.5M1837.7 477h10.5M1837.7 599h10.5M1837.7 629h10.5M1837.7 659h10.5M1837.7 689h10.5M1837.7 719h10.5" stroke="#c26fd6" stroke-opacity="0.6"/></svg>
<div style="position:absolute;left:1906px;top:92px;width:14px;height:650px;background:#212121;"></div>
<div style="position:absolute;left:1906px;top:92px;width:1px;height:650px;background:#2e2e2e;"></div>
<div style="position:absolute;left:1906px;top:556px;width:14px;height:35px;background:#4a4a4a;"></div>
<div style="position:absolute;left:1906px;top:587px;width:14px;height:3px;background:#7a7a7a;"></div>
<div style="position:absolute;left:1914px;top:418px;width:6px;height:6px;background:#d41414;"></div>
<div style="position:absolute;left:1914px;top:453px;width:6px;height:5px;background:#d41414;"></div>
</body></html>
